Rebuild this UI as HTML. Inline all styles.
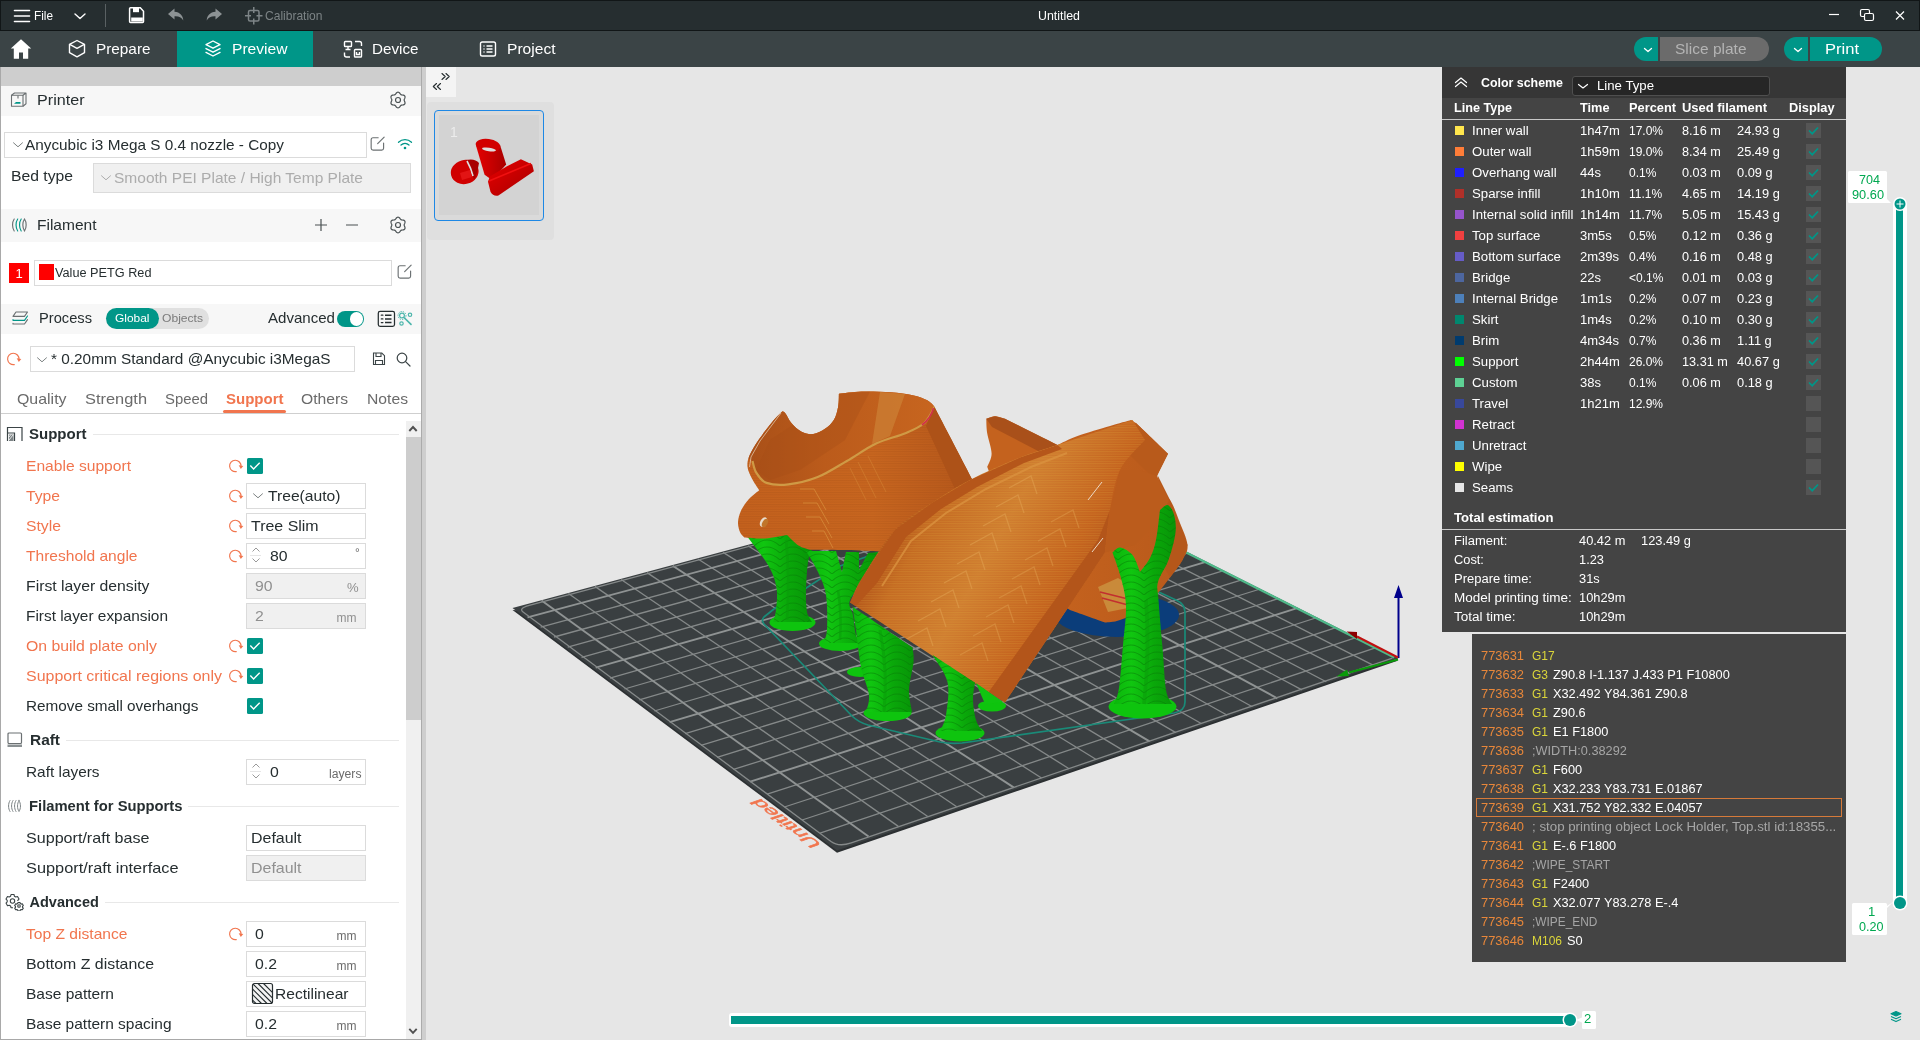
<!DOCTYPE html>
<html><head><meta charset="utf-8"><title>Untitled</title><style>html,body{margin:0;padding:0}body{width:1920px;height:1040px;overflow:hidden;position:relative;background:#e6e6e6;font-family:"Liberation Sans",sans-serif}
.a{position:absolute;display:block}.t{position:absolute;white-space:nowrap;display:block;transform-origin:0 50%}</style></head><body><div id="app" style="position:absolute;left:0;top:0;width:1920px;height:1040px;will-change:transform">
<svg class="a" style="left:0;top:0" width="1920" height="1040" viewBox="0 0 1920 1040">
<defs>
<linearGradient id="gTube" gradientUnits="userSpaceOnUse" x1="880" y1="560" x2="1060" y2="660"><stop offset="0" stop-color="#b4561a"/><stop offset=".12" stop-color="#c46a22"/><stop offset=".45" stop-color="#cf7d30"/><stop offset=".8" stop-color="#c4621e"/><stop offset="1" stop-color="#b2541a"/></linearGradient>
<linearGradient id="gCup" gradientUnits="userSpaceOnUse" x1="740" y1="0" x2="980" y2="0"><stop offset="0" stop-color="#c4611d"/><stop offset=".55" stop-color="#c8661f"/><stop offset="1" stop-color="#b4561a"/></linearGradient>
<linearGradient id="gIn" gradientUnits="userSpaceOnUse" x1="750" y1="0" x2="935" y2="0"><stop offset="0" stop-color="#a95018"/><stop offset=".4" stop-color="#bb5b1b"/><stop offset="1" stop-color="#c7651f"/></linearGradient>
<linearGradient id="gBase" gradientUnits="userSpaceOnUse" x1="1060" y1="0" x2="1190" y2="0"><stop offset="0" stop-color="#c4621e"/><stop offset="1" stop-color="#b8591b"/></linearGradient>
<linearGradient id="gG" x1="0" y1="0" x2="1" y2="0"><stop offset="0" stop-color="#0bb40b"/><stop offset=".3" stop-color="#10c610"/><stop offset=".65" stop-color="#0aa80a"/><stop offset="1" stop-color="#079407"/></linearGradient>
<pattern id="grain" width="26" height="7" patternUnits="userSpaceOnUse"><path d="M-2 9 Q13 -7 28 9" fill="none" stroke="#067e06" stroke-width="1.1" opacity=".55"/></pattern>
<pattern id="lay" width="6" height="2.4" patternUnits="userSpaceOnUse"><rect x="0" y="0" width="6" height="1" fill="#e3b040" opacity=".22"/></pattern>
<pattern id="lay2" width="6" height="2.4" patternUnits="userSpaceOnUse"><rect x="0" y="0" width="6" height="1" fill="#8a3c10" opacity=".16"/></pattern>
</defs>
<polygon points="1398.4,660.5 512.5,610.0 837.0,852.7" fill="#2c3032"/>
<polygon points="1398.4,658.5 1025.5,470.5 512.5,608.0 837.0,850.5" fill="#3a3f41"/>
<clipPath id="platec"><polygon points="1398.4,658.5 1025.5,470.5 512.5,608.0 837.0,850.5"/></clipPath>
<g clip-path="url(#platec)"><g transform="translate(876,0) scale(1.0098,1) translate(-876,-0.5)"><line x1="1372.0" y1="647.9" x2="820.5" y2="833.7" stroke="#858989" stroke-width="1.30"/><line x1="1369.1" y1="666.1" x2="1002.9" y2="478.2" stroke="#858989" stroke-width="1.30"/><line x1="1352.0" y1="637.8" x2="802.8" y2="820.5" stroke="#858989" stroke-width="1.30"/><line x1="1345.6" y1="674.1" x2="981.0" y2="484.0" stroke="#858989" stroke-width="1.30"/><line x1="1332.3" y1="627.8" x2="785.3" y2="807.5" stroke="#858989" stroke-width="1.30"/><line x1="1321.8" y1="682.2" x2="958.9" y2="490.0" stroke="#858989" stroke-width="1.30"/><line x1="1312.9" y1="618.0" x2="768.2" y2="794.7" stroke="#858989" stroke-width="1.30"/><line x1="1297.8" y1="690.4" x2="936.6" y2="496.0" stroke="#858989" stroke-width="1.30"/><line x1="1293.8" y1="608.4" x2="751.4" y2="782.2" stroke="#8f9393" stroke-width="1.90"/><line x1="1273.4" y1="698.8" x2="914.0" y2="502.0" stroke="#8f9393" stroke-width="1.90"/><line x1="1275.0" y1="598.9" x2="734.9" y2="769.9" stroke="#858989" stroke-width="1.30"/><line x1="1248.7" y1="707.2" x2="891.2" y2="508.2" stroke="#858989" stroke-width="1.30"/><line x1="1256.5" y1="589.5" x2="718.6" y2="757.8" stroke="#858989" stroke-width="1.30"/><line x1="1223.8" y1="715.7" x2="868.1" y2="514.3" stroke="#858989" stroke-width="1.30"/><line x1="1238.3" y1="580.3" x2="702.7" y2="745.9" stroke="#858989" stroke-width="1.30"/><line x1="1198.5" y1="724.3" x2="844.8" y2="520.6" stroke="#858989" stroke-width="1.30"/><line x1="1220.3" y1="571.2" x2="687.0" y2="734.2" stroke="#858989" stroke-width="1.30"/><line x1="1172.9" y1="733.1" x2="821.3" y2="526.9" stroke="#858989" stroke-width="1.30"/><line x1="1202.7" y1="562.3" x2="671.6" y2="722.7" stroke="#8f9393" stroke-width="1.90"/><line x1="1146.9" y1="741.9" x2="797.5" y2="533.3" stroke="#8f9393" stroke-width="1.90"/><line x1="1185.3" y1="553.5" x2="656.5" y2="711.5" stroke="#858989" stroke-width="1.30"/><line x1="1120.7" y1="750.9" x2="773.4" y2="539.8" stroke="#858989" stroke-width="1.30"/><line x1="1168.1" y1="544.9" x2="641.6" y2="700.4" stroke="#858989" stroke-width="1.30"/><line x1="1094.1" y1="760.0" x2="749.1" y2="546.3" stroke="#858989" stroke-width="1.30"/><line x1="1151.2" y1="536.3" x2="626.9" y2="689.5" stroke="#858989" stroke-width="1.30"/><line x1="1067.2" y1="769.2" x2="724.6" y2="552.9" stroke="#858989" stroke-width="1.30"/><line x1="1134.6" y1="527.9" x2="612.5" y2="678.7" stroke="#858989" stroke-width="1.30"/><line x1="1039.9" y1="778.5" x2="699.7" y2="559.5" stroke="#858989" stroke-width="1.30"/><line x1="1118.2" y1="519.6" x2="598.4" y2="668.2" stroke="#8f9393" stroke-width="1.90"/><line x1="1012.3" y1="787.9" x2="674.6" y2="566.3" stroke="#8f9393" stroke-width="1.90"/><line x1="1102.0" y1="511.5" x2="584.4" y2="657.8" stroke="#858989" stroke-width="1.30"/><line x1="984.3" y1="797.5" x2="649.2" y2="573.1" stroke="#858989" stroke-width="1.30"/><line x1="1086.1" y1="503.4" x2="570.7" y2="647.6" stroke="#858989" stroke-width="1.30"/><line x1="955.9" y1="807.2" x2="623.6" y2="580.0" stroke="#858989" stroke-width="1.30"/><line x1="1070.4" y1="495.5" x2="557.2" y2="637.5" stroke="#858989" stroke-width="1.30"/><line x1="927.2" y1="817.0" x2="597.6" y2="586.9" stroke="#858989" stroke-width="1.30"/><line x1="1054.9" y1="487.7" x2="543.9" y2="627.6" stroke="#858989" stroke-width="1.30"/><line x1="898.1" y1="826.9" x2="571.4" y2="594.0" stroke="#858989" stroke-width="1.30"/><line x1="1039.6" y1="479.9" x2="530.9" y2="617.9" stroke="#8f9393" stroke-width="1.90"/><line x1="868.6" y1="837.0" x2="544.8" y2="601.1" stroke="#8f9393" stroke-width="1.90"/></g></g>
<path d="M1392.4 658.2 L851.3 842.9 Q838.6 847.2 831.0 841.5 L523.4 612.3 Q518.0 608.3 529.3 605.3 L1015.5 474.8 Q1024.6 472.3 1030.9 475.5 " fill="none" stroke="#858989" stroke-width="1.3"/>
<line x1="1394.3" y1="657.5" x2="1026.4" y2="471.9" stroke="#4fb98a" stroke-width="2.2"/>
<text transform="matrix(-0.80,-0.60,0.899,-0.308,822.5,845)" font-family="Liberation Sans,sans-serif" font-size="17.5" fill="#f1754e" stroke="#f1754e" stroke-width=".6" textLength="78" lengthAdjust="spacingAndGlyphs">Untitled</text>
<path d="M774 609 L764 617 Q761 620 764 624 L852 716 Q858 722 868 725 L940 742 Q950 744 962 743 L1174 713 Q1185 711 1185 702 L1185 612 Q1185 604 1176 600 L1150 588" fill="none" stroke="#1a8a78" stroke-width="1.7"/>
<path d="M774 609 L840 566 L880 552" fill="none" stroke="#1a8a78" stroke-width="1.7"/>
<ellipse cx="1117" cy="615" rx="62" ry="22" fill="#0b3d7a"/>
<ellipse cx="870" cy="588" rx="28" ry="12" fill="#0b3d7a"/>
<ellipse cx="792.5" cy="622.5" rx="23" ry="8.5" fill="#0ec40e"/><path d="M743.0 531.0 C746.7 531.0 757.7 531.5 765.0 531.0 C772.3 530.5 783.3 528.5 787.0 528.0 C789.0 530.8 794.8 541.3 799.0 545.0 C803.2 548.7 809.8 549.2 812.0 550.0 C811.3 552.0 809.0 555.3 808.0 562.0 C807.0 568.7 806.2 581.7 806.0 590.0 C805.8 598.3 806.0 606.7 807.0 612.0 C808.0 617.3 811.2 620.3 812.0 622.0 C805.5 622.0 779.5 622.0 773.0 622.0 C773.5 620.0 775.4 615.7 776.0 610.0 C776.6 604.3 777.8 595.5 776.5 588.0 C775.2 580.5 773.6 574.5 768.0 565.0 C762.4 555.5 747.2 536.7 743.0 531.0Z" fill="url(#gG)"/><path d="M743.0 531.0 C746.7 531.0 757.7 531.5 765.0 531.0 C772.3 530.5 783.3 528.5 787.0 528.0 C789.0 530.8 794.8 541.3 799.0 545.0 C803.2 548.7 809.8 549.2 812.0 550.0 C811.3 552.0 809.0 555.3 808.0 562.0 C807.0 568.7 806.2 581.7 806.0 590.0 C805.8 598.3 806.0 606.7 807.0 612.0 C808.0 617.3 811.2 620.3 812.0 622.0 C805.5 622.0 779.5 622.0 773.0 622.0 C773.5 620.0 775.4 615.7 776.0 610.0 C776.6 604.3 777.8 595.5 776.5 588.0 C775.2 580.5 773.6 574.5 768.0 565.0 C762.4 555.5 747.2 536.7 743.0 531.0Z" fill="url(#grain)"/>
<path d="M786 540 Q790 575 787 620" stroke="#0a9c0a" stroke-width="2.5" fill="none" opacity=".6"/>
<ellipse cx="840" cy="643.5" rx="21" ry="7.5" fill="#0ec40e"/><path d="M806.0 551.0 C811.0 551.0 831.0 551.0 836.0 551.0 C837.0 554.5 841.0 568.5 842.0 572.0 C842.7 568.7 845.3 555.3 846.0 552.0 C848.2 552.0 856.8 552.0 859.0 552.0 C859.0 555.0 859.0 567.0 859.0 570.0 C860.5 567.2 866.5 555.8 868.0 553.0 C870.0 552.8 878.0 552.2 880.0 552.0 C878.0 556.0 873.0 568.0 868.0 576.0 C863.0 584.0 852.5 593.5 850.0 600.0 C847.5 606.5 852.0 609.2 853.0 615.0 C854.0 620.8 854.7 630.3 856.0 635.0 C857.3 639.7 860.2 641.7 861.0 643.0 C854.7 643.0 829.3 643.0 823.0 643.0 C823.7 640.8 826.5 638.0 827.0 630.0 C827.5 622.0 827.5 604.7 826.0 595.0 C824.5 585.3 821.3 579.3 818.0 572.0 C814.7 564.7 808.0 554.5 806.0 551.0Z" fill="url(#gG)"/><path d="M806.0 551.0 C811.0 551.0 831.0 551.0 836.0 551.0 C837.0 554.5 841.0 568.5 842.0 572.0 C842.7 568.7 845.3 555.3 846.0 552.0 C848.2 552.0 856.8 552.0 859.0 552.0 C859.0 555.0 859.0 567.0 859.0 570.0 C860.5 567.2 866.5 555.8 868.0 553.0 C870.0 552.8 878.0 552.2 880.0 552.0 C878.0 556.0 873.0 568.0 868.0 576.0 C863.0 584.0 852.5 593.5 850.0 600.0 C847.5 606.5 852.0 609.2 853.0 615.0 C854.0 620.8 854.7 630.3 856.0 635.0 C857.3 639.7 860.2 641.7 861.0 643.0 C854.7 643.0 829.3 643.0 823.0 643.0 C823.7 640.8 826.5 638.0 827.0 630.0 C827.5 622.0 827.5 604.7 826.0 595.0 C824.5 585.3 821.3 579.3 818.0 572.0 C814.7 564.7 808.0 554.5 806.0 551.0Z" fill="url(#grain)"/>
<path d="M838 590 Q842 615 840 640" stroke="#0a9c0a" stroke-width="2.500" fill="none" opacity=".6"/>
<clipPath id="cupc"><path d="M782.6 411.3 C781.1 412.8 777.7 415.5 773.8 420.1 C769.9 424.7 763.2 433.3 759.2 439.1 C755.2 444.9 751.7 450.5 749.7 455.1 C747.8 459.7 747.1 462.9 747.5 466.8 C747.9 470.7 749.9 474.6 751.9 478.5 C753.9 482.4 758.0 488.2 759.2 490.2 C757.5 491.7 752.0 495.6 749.0 499.0 C746.0 502.4 742.8 506.8 741.0 510.7 C739.2 514.6 738.1 518.8 738.0 522.4 C737.9 526.0 739.1 530.1 740.2 532.6 C741.3 535.1 743.7 536.7 744.4 537.5 C747.8 537.7 757.9 538.9 765.0 538.5 C772.1 538.1 783.3 535.6 787.0 535.0 C788.9 536.8 794.7 543.0 798.5 545.5 C802.3 548.0 808.1 549.1 810.0 549.8 C815.3 549.8 830.8 549.8 842.0 550.0 C853.2 550.2 869.0 550.8 877.0 551.3 C885.0 551.8 887.8 552.7 890.0 553.0 C906.7 544.2 973.3 508.8 990.0 500.0 C987.1 496.7 975.5 483.3 972.6 480.0 C966.3 467.8 940.9 419.1 934.6 406.9 C933.4 405.8 930.9 402.2 927.3 400.3 C923.6 398.4 918.8 396.5 912.7 395.2 C906.6 393.9 899.2 392.9 890.7 392.3 C882.2 391.7 870.1 391.4 861.5 391.6 C852.9 391.9 842.7 393.4 838.9 393.8 C838.8 396.0 839.0 402.5 838.1 406.9 C837.2 411.3 836.0 416.5 833.8 420.1 C831.6 423.8 828.4 426.5 825.0 428.8 C821.6 431.1 817.2 433.5 813.3 434.0 C809.4 434.5 805.2 433.6 801.6 431.8 C798.0 430.0 794.1 426.1 791.4 423.0 C788.7 419.9 787.0 415.4 785.5 413.5 C784.0 411.6 783.1 411.7 782.6 411.3Z"/></clipPath>
<path d="M782.6 411.3 C781.1 412.8 777.7 415.5 773.8 420.1 C769.9 424.7 763.2 433.3 759.2 439.1 C755.2 444.9 751.7 450.5 749.7 455.1 C747.8 459.7 747.1 462.9 747.5 466.8 C747.9 470.7 749.9 474.6 751.9 478.5 C753.9 482.4 758.0 488.2 759.2 490.2 C757.5 491.7 752.0 495.6 749.0 499.0 C746.0 502.4 742.8 506.8 741.0 510.7 C739.2 514.6 738.1 518.8 738.0 522.4 C737.9 526.0 739.1 530.1 740.2 532.6 C741.3 535.1 743.7 536.7 744.4 537.5 C747.8 537.7 757.9 538.9 765.0 538.5 C772.1 538.1 783.3 535.6 787.0 535.0 C788.9 536.8 794.7 543.0 798.5 545.5 C802.3 548.0 808.1 549.1 810.0 549.8 C815.3 549.8 830.8 549.8 842.0 550.0 C853.2 550.2 869.0 550.8 877.0 551.3 C885.0 551.8 887.8 552.7 890.0 553.0 C906.7 544.2 973.3 508.8 990.0 500.0 C987.1 496.7 975.5 483.3 972.6 480.0 C966.3 467.8 940.9 419.1 934.6 406.9 C933.4 405.8 930.9 402.2 927.3 400.3 C923.6 398.4 918.8 396.5 912.7 395.2 C906.6 393.9 899.2 392.9 890.7 392.3 C882.2 391.7 870.1 391.4 861.5 391.6 C852.9 391.9 842.7 393.4 838.9 393.8 C838.8 396.0 839.0 402.5 838.1 406.9 C837.2 411.3 836.0 416.5 833.8 420.1 C831.6 423.8 828.4 426.5 825.0 428.8 C821.6 431.1 817.2 433.5 813.3 434.0 C809.4 434.5 805.2 433.6 801.6 431.8 C798.0 430.0 794.1 426.1 791.4 423.0 C788.7 419.9 787.0 415.4 785.5 413.5 C784.0 411.6 783.1 411.7 782.6 411.3Z" fill="url(#gCup)"/>
<path d="M782.6 411.3 C781.1 412.8 777.7 415.5 773.8 420.1 C769.9 424.7 763.2 433.3 759.2 439.1 C755.2 444.9 751.7 450.5 749.7 455.1 C747.8 459.7 747.1 462.9 747.5 466.8 C747.9 470.7 749.9 474.6 751.9 478.5 C753.9 482.4 758.0 488.2 759.2 490.2 C757.5 491.7 752.0 495.6 749.0 499.0 C746.0 502.4 742.8 506.8 741.0 510.7 C739.2 514.6 738.1 518.8 738.0 522.4 C737.9 526.0 739.1 530.1 740.2 532.6 C741.3 535.1 743.7 536.7 744.4 537.5 C747.8 537.7 757.9 538.9 765.0 538.5 C772.1 538.1 783.3 535.6 787.0 535.0 C788.9 536.8 794.7 543.0 798.5 545.5 C802.3 548.0 808.1 549.1 810.0 549.8 C815.3 549.8 830.8 549.8 842.0 550.0 C853.2 550.2 869.0 550.8 877.0 551.3 C885.0 551.8 887.8 552.7 890.0 553.0 C906.7 544.2 973.3 508.8 990.0 500.0 C987.1 496.7 975.5 483.3 972.6 480.0 C966.3 467.8 940.9 419.1 934.6 406.9 C933.4 405.8 930.9 402.2 927.3 400.3 C923.6 398.4 918.8 396.5 912.7 395.2 C906.6 393.9 899.2 392.9 890.7 392.3 C882.2 391.7 870.1 391.4 861.5 391.6 C852.9 391.9 842.7 393.4 838.9 393.8 C838.8 396.0 839.0 402.5 838.1 406.9 C837.2 411.3 836.0 416.5 833.8 420.1 C831.6 423.8 828.4 426.5 825.0 428.8 C821.6 431.1 817.2 433.5 813.3 434.0 C809.4 434.5 805.2 433.6 801.6 431.8 C798.0 430.0 794.1 426.1 791.4 423.0 C788.7 419.9 787.0 415.4 785.5 413.5 C784.0 411.6 783.1 411.7 782.6 411.3Z" fill="url(#lay2)"/>
<g clip-path="url(#cupc)"><path d="M934.6 406.9 C932.9 409.6 929.3 418.6 924.4 423.0 C919.5 427.4 913.4 429.8 905.4 433.2 C897.4 436.6 885.9 438.9 876.1 443.5 C866.4 448.1 856.6 455.4 846.9 461.0 C837.2 466.6 827.4 473.2 817.7 477.1 C808.0 481.0 797.0 483.4 788.5 484.4 C780.0 485.4 771.9 484.8 766.5 482.9 C761.1 480.9 758.6 476.3 756.3 472.7 C754.0 469.1 753.1 462.9 752.5 461.0 L735 450 L735 380 L945 380Z" fill="url(#gIn)"/>
<path d="M838.9 393.8 L870 391.5 L845 440 L800 470 L770 480 L756 470 L770 440 Z" fill="#a64e17" opacity=".35"/>
<path d="M880 392 L905 394 L890 436 L872 444Z" fill="#d08a3c" opacity=".55"/>
<path d="M934.6 406.9 C932.9 409.6 929.3 418.6 924.4 423.0 C919.5 427.4 913.4 429.8 905.4 433.2 C897.4 436.6 885.9 438.9 876.1 443.5 C866.4 448.1 856.6 455.4 846.9 461.0 C837.2 466.6 827.4 473.2 817.7 477.1 C808.0 481.0 797.0 483.4 788.5 484.4 C780.0 485.4 771.9 484.8 766.5 482.9 C761.1 480.9 758.6 476.3 756.3 472.7 C754.0 469.1 753.1 462.9 752.5 461.0" fill="none" stroke="#cf9a45" stroke-width="2.2"/>
<path d="M934.6 406.9 L972.6 480 L990 500 L960 500 L926 426Z" fill="#ad5218"/>
<g fill="none" stroke="#d9913f" stroke-width="1" opacity=".7"><path d="M800 489 L814 489 L826 510 M803 503 L817 503 L829 524 M806 517 L820 517 L832 538 M812 531 L824 531 L833 548"/><path d="M850 468 L866 500 M858 462 L876 498 M868 456 L886 492" opacity=".6"/></g>
</g>
<path d="M933.500 408 Q931 418 922 425" fill="none" stroke="#d2304a" stroke-width="1.600"/>
<path d="M781 413 L760 441 L751 457 L749.500 467" fill="none" stroke="#e6d2b8" stroke-width=".9" opacity=".8"/>
<ellipse cx="763.500" cy="522" rx="3.200" ry="5.200" transform="rotate(28 763.500 522)" fill="#e8dccc"/>
<ellipse cx="765" cy="523" rx="2.600" ry="4.600" transform="rotate(28 765 523)" fill="#c0752a"/>
<path d="M986.3 418.8 C987.8 418.4 991.9 416.3 995.0 416.3 C998.1 416.3 1003.3 418.4 1005.0 418.8 C1013.8 423.2 1048.8 440.6 1057.5 445.0 C1060.8 443.5 1068.8 439.2 1077.5 436.0 C1086.2 432.8 1101.1 428.7 1110.0 426.0 C1118.9 423.3 1127.5 421.0 1131.0 420.0 C1131.8 420.5 1135.2 422.5 1136.0 423.0 C1141.3 428.1 1162.7 448.6 1168.0 453.8 C1165.8 458.1 1157.2 475.6 1155.0 480.0 C1155.2 481.0 1153.5 482.7 1156.0 486.0 C1158.5 489.3 1166.2 494.3 1170.0 500.0 C1173.8 505.7 1175.9 512.5 1178.8 520.0 C1181.7 527.5 1186.9 538.3 1187.5 545.0 C1188.1 551.7 1185.4 554.6 1182.5 560.0 C1179.6 565.4 1176.2 569.6 1170.0 577.5 C1163.8 585.4 1153.3 600.4 1145.0 607.5 C1136.7 614.6 1126.7 617.5 1120.0 620.0 C1113.3 622.5 1107.5 622.1 1105.0 622.5 C1099.2 620.4 1075.8 612.1 1070.0 610.0 C1065.0 606.7 1045.0 593.3 1040.0 590.0 C1033.3 575.0 1006.7 515.0 1000.0 500.0 C997.9 494.5 989.3 472.3 987.2 466.8 C987.9 464.6 991.6 459.3 991.6 453.7 C991.6 448.1 988.1 439.0 987.2 433.2 C986.3 427.4 986.4 421.2 986.3 418.8Z" fill="url(#gBase)"/>
<path d="M986.300 418.800 L995 416.300 L1005 418.800 L1057.500 445 L1040 452 L992 427Z" fill="#a9501a"/>
<path d="M1098 587 L1118 578 L1140 592 L1128 608 L1108 612Z" fill="#c98a3a"/>
<path d="M1100 592 L1132 600 M1102 598 L1128 605" stroke="#c22f2f" stroke-width="1.500"/>
<path d="M1157.500 475 L1170 500 L1187.500 545 L1182.500 560 L1170 577.500 L1160 560 L1165 520Z" fill="#b5571a"/>
<path d="M1136 423 L1168 453.750 L1155 480 L1125 450Z" fill="#b85a1b"/>
<clipPath id="tubec"><path d="M850.0 602.5 C852.0 598.4 854.5 590.1 862.0 578.0 C869.5 565.9 883.2 542.6 895.0 530.0 C906.8 517.4 920.0 510.8 932.5 502.5 C945.0 494.2 955.4 487.5 970.0 480.0 C984.6 472.5 1005.4 463.3 1020.0 457.5 C1034.6 451.7 1038.8 451.2 1057.5 445.0 C1076.2 438.8 1120.0 424.2 1132.5 420.0 C1134.6 423.3 1142.9 436.7 1145.0 440.0 C1140.8 445.0 1125.8 458.3 1120.0 470.0 C1114.2 481.7 1112.5 496.2 1110.0 510.0 C1107.5 523.8 1105.8 545.4 1105.0 552.5 C1103.3 555.0 1111.7 542.5 1095.0 567.5 C1078.3 592.5 1020.0 680.0 1005.0 702.5 C979.2 685.8 875.8 619.2 850.0 602.5Z"/></clipPath>
<path d="M850.0 602.5 C852.0 598.4 854.5 590.1 862.0 578.0 C869.5 565.9 883.2 542.6 895.0 530.0 C906.8 517.4 920.0 510.8 932.5 502.5 C945.0 494.2 955.4 487.5 970.0 480.0 C984.6 472.5 1005.4 463.3 1020.0 457.5 C1034.6 451.7 1038.8 451.2 1057.5 445.0 C1076.2 438.8 1120.0 424.2 1132.5 420.0 C1134.6 423.3 1142.9 436.7 1145.0 440.0 C1140.8 445.0 1125.8 458.3 1120.0 470.0 C1114.2 481.7 1112.5 496.2 1110.0 510.0 C1107.5 523.8 1105.8 545.4 1105.0 552.5 C1103.3 555.0 1111.7 542.5 1095.0 567.5 C1078.3 592.5 1020.0 680.0 1005.0 702.5 C979.2 685.8 875.8 619.2 850.0 602.5Z" fill="url(#gTube)"/>
<path d="M850.0 602.5 C852.0 598.4 854.5 590.1 862.0 578.0 C869.5 565.9 883.2 542.6 895.0 530.0 C906.8 517.4 920.0 510.8 932.5 502.5 C945.0 494.2 955.4 487.5 970.0 480.0 C984.6 472.5 1005.4 463.3 1020.0 457.5 C1034.6 451.7 1038.8 451.2 1057.5 445.0 C1076.2 438.8 1120.0 424.2 1132.5 420.0 C1134.6 423.3 1142.9 436.7 1145.0 440.0 C1140.8 445.0 1125.8 458.3 1120.0 470.0 C1114.2 481.7 1112.5 496.2 1110.0 510.0 C1107.5 523.8 1105.8 545.4 1105.0 552.5 C1103.3 555.0 1111.7 542.5 1095.0 567.5 C1078.3 592.5 1020.0 680.0 1005.0 702.5 C979.2 685.8 875.8 619.2 850.0 602.5Z" fill="url(#lay)"/>
<g clip-path="url(#tubec)">
<path d="M850 602.500 L862 578 L895 530 L932.500 502.500 L970 480 L1020 457.500 L1057.500 445 L1062 449 L1024 463 L977 487 L941 509 L906 537 L877 583 L856 606Z" fill="#b5561a"/>
<path d="M882 586 L911 541 L946 513 L986 489 L1031 467 L1067 453" fill="none" stroke="#d9913f" stroke-width="2" opacity=".8"/>
<path d="M905 640 l22 -12 l6 18 M918 621 l22 -12 l6 18 M931 602 l22 -12 l6 18 M944 583 l22 -12 l6 18 M957 564 l22 -12 l6 18 M970 545 l22 -12 l6 18 M983 526 l22 -12 l6 18 M996 507 l22 -12 l6 18 M1009 488 l22 -12 l6 18" fill="none" stroke="#e0a050" stroke-width="1.3" opacity=".55"/>
<path d="M960 655 l22 -12 l6 18 M973 636 l22 -12 l6 18 M986 617 l22 -12 l6 18 M999 598 l22 -12 l6 18 M1012 579 l22 -12 l6 18 M1025 560 l22 -12 l6 18 M1038 541 l22 -12 l6 18 M1051 522 l22 -12 l6 18" fill="none" stroke="#e0a050" stroke-width="1.3" opacity=".45"/>
<path d="M1005 702.500 L1095 567.500 L1105 552.500 L1110 510 L1098 540 L988 693Z" fill="#b3551a"/>
</g>
<path d="M1105 552.500 L1110 510 L1120 470 L1140 470 L1157 476 L1169 500 L1160 520 L1135 545Z" fill="#bb5c1c"/>
<path d="M1088 500 L1102 482 M1092 552 L1103 538" stroke="#ecd9c4" stroke-width="1"/>
<ellipse cx="860" cy="672" rx="13" ry="5" fill="#0ec40e"/>
<ellipse cx="887.5" cy="713" rx="24" ry="8" fill="#0ec40e"/><path d="M852.5 606.8 C862.5 613.6 902.5 640.7 912.5 647.5 C912.7 649.9 914.1 654.9 913.5 662.0 C912.9 669.1 909.2 681.7 909.0 690.0 C908.8 698.3 911.5 708.3 912.0 712.0 C904.3 712.0 873.7 712.0 866.0 712.0 C866.5 709.2 869.8 702.5 869.0 695.0 C868.2 687.5 863.2 677.8 861.0 667.0 C858.8 656.2 857.4 640.0 856.0 630.0 C854.6 620.0 853.1 610.7 852.5 606.8Z" fill="url(#gG)"/><path d="M852.5 606.8 C862.5 613.6 902.5 640.7 912.5 647.5 C912.7 649.9 914.1 654.9 913.5 662.0 C912.9 669.1 909.2 681.7 909.0 690.0 C908.8 698.3 911.5 708.3 912.0 712.0 C904.3 712.0 873.7 712.0 866.0 712.0 C866.5 709.2 869.8 702.5 869.0 695.0 C868.2 687.5 863.2 677.8 861.0 667.0 C858.8 656.2 857.4 640.0 856.0 630.0 C854.6 620.0 853.1 610.7 852.5 606.8Z" fill="url(#grain)"/>
<path d="M880 630 Q888 670 884 712" stroke="#0a9c0a" stroke-width="3" fill="none" opacity=".55"/>
<ellipse cx="992" cy="706" rx="14" ry="5.500" fill="#0ec40e"/>
<path d="M976 683 L1003 702 L985 704Z" fill="#10c410"/>
<ellipse cx="960" cy="733" rx="24.5" ry="8.5" fill="#0ec40e"/><path d="M932.5 655.0 C939.6 659.6 967.9 677.9 975.0 682.5 C974.7 685.4 972.8 693.8 973.0 700.0 C973.2 706.2 974.5 714.8 976.0 720.0 C977.5 725.2 981.0 729.2 982.0 731.0 C975.0 731.0 947.0 731.0 940.0 731.0 C941.0 728.3 944.8 723.2 946.0 715.0 C947.2 706.8 949.8 692.0 947.5 682.0 C945.2 672.0 935.0 659.5 932.5 655.0Z" fill="url(#gG)"/><path d="M932.5 655.0 C939.6 659.6 967.9 677.9 975.0 682.5 C974.7 685.4 972.8 693.8 973.0 700.0 C973.2 706.2 974.5 714.8 976.0 720.0 C977.5 725.2 981.0 729.2 982.0 731.0 C975.0 731.0 947.0 731.0 940.0 731.0 C941.0 728.3 944.8 723.2 946.0 715.0 C947.2 706.8 949.8 692.0 947.5 682.0 C945.2 672.0 935.0 659.5 932.5 655.0Z" fill="url(#grain)"/>
<ellipse cx="1142.5" cy="706.5" rx="34" ry="12" fill="#0ec40e"/><path d="M1112.5 552.5 C1113.8 551.7 1116.7 547.1 1120.0 547.5 C1123.3 547.9 1129.2 550.9 1132.5 555.0 C1135.8 559.1 1138.8 569.2 1140.0 572.0 C1141.7 569.7 1147.3 563.3 1150.0 558.0 C1152.7 552.7 1154.3 548.0 1156.0 540.0 C1157.7 532.0 1159.3 515.0 1160.0 510.0 C1161.2 509.2 1165.2 504.3 1167.5 505.0 C1169.8 505.7 1172.4 509.4 1173.8 514.0 C1175.1 518.6 1176.4 524.8 1175.5 532.5 C1174.6 540.2 1171.4 551.8 1168.5 560.0 C1165.6 568.2 1159.7 575.3 1158.0 582.0 C1156.3 588.7 1157.8 589.1 1158.5 600.0 C1159.2 610.9 1161.2 632.5 1162.5 647.5 C1163.8 662.5 1164.4 680.6 1166.0 690.0 C1167.6 699.4 1171.0 701.7 1172.0 704.0 C1162.3 704.0 1123.7 704.0 1114.0 704.0 C1114.8 701.3 1117.5 697.8 1119.0 688.0 C1120.5 678.2 1121.8 658.7 1123.0 645.0 C1124.2 631.3 1126.3 617.2 1126.0 606.0 C1125.7 594.8 1123.2 586.9 1121.0 578.0 C1118.8 569.1 1113.9 556.8 1112.5 552.5Z" fill="url(#gG)"/><path d="M1112.5 552.5 C1113.8 551.7 1116.7 547.1 1120.0 547.5 C1123.3 547.9 1129.2 550.9 1132.5 555.0 C1135.8 559.1 1138.8 569.2 1140.0 572.0 C1141.7 569.7 1147.3 563.3 1150.0 558.0 C1152.7 552.7 1154.3 548.0 1156.0 540.0 C1157.7 532.0 1159.3 515.0 1160.0 510.0 C1161.2 509.2 1165.2 504.3 1167.5 505.0 C1169.8 505.7 1172.4 509.4 1173.8 514.0 C1175.1 518.6 1176.4 524.8 1175.5 532.5 C1174.6 540.2 1171.4 551.8 1168.5 560.0 C1165.6 568.2 1159.7 575.3 1158.0 582.0 C1156.3 588.7 1157.8 589.1 1158.5 600.0 C1159.2 610.9 1161.2 632.5 1162.5 647.5 C1163.8 662.5 1164.4 680.6 1166.0 690.0 C1167.6 699.4 1171.0 701.7 1172.0 704.0 C1162.3 704.0 1123.7 704.0 1114.0 704.0 C1114.8 701.3 1117.5 697.8 1119.0 688.0 C1120.5 678.2 1121.8 658.7 1123.0 645.0 C1124.2 631.3 1126.3 617.2 1126.0 606.0 C1125.7 594.8 1123.2 586.9 1121.0 578.0 C1118.8 569.1 1113.9 556.8 1112.5 552.5Z" fill="url(#grain)"/>
<path d="M1146 600 Q1150 650 1144 704" stroke="#0a9c0a" stroke-width="3.500" fill="none" opacity=".5"/>
<path d="M1397.500 658 L1397.500 598 L1394 598 L1398.500 585 L1403 598 L1399.500 598 L1399.500 658Z" fill="#00008b"/>
<path d="M1398 657.500 L1357 636.500" stroke="#c01010" stroke-width="2"/><path d="M1346.500 631.500 L1357 632 L1357 639Z" fill="#8b0000"/>
<path d="M1398 659.500 L1349 672.500" stroke="#0a9a0a" stroke-width="2"/><path d="M1336.500 676.500 L1347 669.500 L1349 676Z" fill="#0a9a0a"/>
</svg>
<div class="a" style="left:0px;top:0px;width:1920px;height:31px;background:#262e30;"></div>
<div class="a" style="left:0px;top:30px;width:1920px;height:1px;background:#111617;"></div>
<div class="a" style="left:0px;top:0px;width:1920px;height:1px;background:#111617;"></div>
<div class="a" style="left:0px;top:0px;width:1px;height:31px;background:#111617;"></div>
<div class="a" style="left:1919px;top:0px;width:1px;height:31px;background:#111617;"></div>
<svg class="a" style="left:12px;top:7px" width="20" height="18" viewBox="0 0 20 18"><g stroke="#fff" stroke-width="1.6" stroke-linecap="round"><path d="M2.5 3.5h15M2.5 9h15M2.5 14.5h15"/></g></svg>
<div class="t" style="left:33.50px;top:6.64px;height:18px;line-height:18px;font-size:12px;color:#fff;transform:scaleX(0.9826);">File</div>
<svg class="a" style="left:72px;top:10px" width="16" height="12" viewBox="0 0 16 12"><path d="M3 4l5 4.5L13 4" fill="none" stroke="#fff" stroke-width="1.4" stroke-linecap="round" stroke-linejoin="round"/></svg>
<div class="a" style="left:105px;top:4px;width:1px;height:23px;background:#5a6163;"></div>
<svg class="a" style="left:128px;top:6px" width="18" height="18" viewBox="0 0 18 18"><path d="M2.5 1.8h9.8l3.2 3.4v10.3a.9.9 0 0 1-.9.9H2.5a.9.9 0 0 1-.9-.9V2.7a.9.9 0 0 1 .9-.9z" fill="none" stroke="#fff" stroke-width="1.5"/><path d="M5 2v4.2h6V2z" fill="#fff"/><path d="M3.2 11.5h11.6v4H3.2z" fill="#fff"/></svg>
<svg class="a" style="left:166px;top:7px" width="20" height="16" viewBox="0 0 20 16"><path d="M8.5 1.5L2 7l6.5 5.5V9.2c4-.3 6.8.9 8.8 4.3-.3-5-3.3-8.400-8.800-8.800z" fill="#8c9294"/></svg>
<svg class="a" style="left:204px;top:7px" width="20" height="16" viewBox="0 0 20 16"><path d="M11.500 1.5L18 7l-6.500 5.500V9.200c-4-.3-6.800.9-8.800 4.300.3-5 3.300-8.400 8.800-8.800z" fill="#8c9294"/></svg>
<svg class="a" style="left:244px;top:6px" width="20" height="20" viewBox="0 0 20 20"><g fill="none" stroke="#7d8486" stroke-width="1.5"><rect x="4.500" y="4.500" width="10.500" height="10.500" rx="1.500"/><path d="M9.750 1v6M9.750 12.500v6M1 9.750h6M12.500 9.750h6"/></g></svg>
<div class="t" style="left:265.00px;top:5.66px;height:20px;line-height:20px;font-size:13.5px;color:#7d8486;transform:scaleX(0.8910);">Calibration</div>
<div class="t" style="left:1038.00px;top:5.66px;height:20px;line-height:20px;font-size:13.5px;color:#fff;transform:scaleX(0.9175);">Untitled</div>
<svg class="a" style="left:1822px;top:4px" width="92" height="24" viewBox="0 0 92 24"><g fill="none" stroke="#fff" stroke-width="1.2"><path d="M7 10.500h10"/><rect x="38.500" y="5.500" width="9" height="7" rx="1.500"/><rect x="42.500" y="9.500" width="9" height="7" rx="1.500" fill="#262e30"/><path d="M74 7.500l8 8M82 7.500l-8 8"/></g></svg>
<div class="a" style="left:0px;top:31px;width:1920px;height:36px;background:#3b4446;"></div>
<div class="a" style="left:177px;top:31px;width:136px;height:36px;background:#009688;"></div>
<svg class="a" style="left:9px;top:37px" width="24" height="24" viewBox="0 0 24 24"><path d="M12 2.200L1.800 11.600h3V21.800h5.200v-6.300h4v6.300h5.200V11.600h3z" fill="#fff"/></svg>
<svg class="a" style="left:67px;top:38px" width="20" height="22" viewBox="0 0 20 22"><g fill="none" stroke="#fff" stroke-width="1.4" stroke-linejoin="round"><path d="M10 2.500l7.500 3.800v8.400L10 18.800l-7.500-4.100V6.300z"/><path d="M2.700 6.400L10 10.300l7.300-3.900"/></g></svg>
<div class="t" style="left:96.00px;top:38.17px;height:21px;line-height:21px;font-size:15px;color:#fff;transform:scaleX(1.0212);">Prepare</div>
<svg class="a" style="left:203px;top:38px" width="20" height="22" viewBox="0 0 20 22"><g fill="none" stroke="#fff" stroke-width="1.4" stroke-linejoin="round" stroke-linecap="round"><path d="M10 3l7 3.600-7 3.600-7-3.600z"/><path d="M3 10.600l7 3.600 7-3.600"/><path d="M3 14.400l7 3.600 7-3.600"/></g></svg>
<div class="t" style="left:232.00px;top:38.17px;height:21px;line-height:21px;font-size:15px;color:#fff;transform:scaleX(1.0403);">Preview</div>
<svg class="a" style="left:342px;top:38px" width="22" height="22" viewBox="0 0 22 22"><g fill="none" stroke="#fff" stroke-width="1.4"><rect x="2.500" y="3.500" width="7" height="5" rx=".8"/><path d="M6 8.500v3M3.500 11.500h5"/><rect x="12.500" y="11.500" width="7" height="7.500" rx=".8"/><path d="M14.500 14v2.500h3V14"/><path d="M13 3.500h4.500a2 2 0 0 1 2 2V8M2.500 14.500v2.500a2 2 0 0 0 2 2H8"/></g></svg>
<div class="t" style="left:372.00px;top:38.17px;height:21px;line-height:21px;font-size:15px;color:#fff;transform:scaleX(1.0142);">Device</div>
<svg class="a" style="left:478px;top:39px" width="20" height="20" viewBox="0 0 20 20"><g fill="none" stroke="#fff" stroke-width="1.4"><rect x="2.500" y="3" width="15" height="14" rx="1.800"/><path d="M8.500 7h6M8.500 10h6M8.500 13h6" /><path d="M5.500 7h1M5.500 10h1M5.500 13h1"/></g></svg>
<div class="t" style="left:507.00px;top:38.17px;height:21px;line-height:21px;font-size:15px;color:#fff;transform:scaleX(1.0388);">Project</div>
<div class="a" style="left:1634px;top:37px;width:24px;height:24px;background:#009688;border-radius:12px 0 0 12px"></div>
<div class="a" style="left:1660px;top:37px;width:109px;height:24px;background:#6b6b6b;border-radius:0 12px 12px 0"></div>
<svg class="a" style="left:1641.800px;top:44.700px" width="12" height="10" viewBox="0 0 12 10"><path d="M2.500 3.500l3.500 3 3.500-3" fill="none" stroke="#fff" stroke-width="1.3" stroke-linecap="round" stroke-linejoin="round"/></svg>
<div class="t" style="left:1675.00px;top:38.17px;height:21px;line-height:21px;font-size:15px;color:#b4b4b4;transform:scaleX(1.0331);">Slice plate</div>
<div class="a" style="left:1784px;top:37px;width:24px;height:24px;background:#009688;border-radius:12px 0 0 12px"></div>
<div class="a" style="left:1810px;top:37px;width:72px;height:24px;background:#009688;border-radius:0 12px 12px 0"></div>
<svg class="a" style="left:1791.800px;top:44.700px" width="12" height="10" viewBox="0 0 12 10"><path d="M2.500 3.500l3.500 3 3.500-3" fill="none" stroke="#fff" stroke-width="1.3" stroke-linecap="round" stroke-linejoin="round"/></svg>
<div class="t" style="left:1825.00px;top:38.17px;height:21px;line-height:21px;font-size:15px;color:#fff;transform:scaleX(1.1023);">Print</div>
<div class="a" style="left:0px;top:67px;width:426px;height:973px;background:#cecece;"></div>
<div class="a" style="left:1px;top:86px;width:420px;height:954px;background:#fff;"></div>
<div class="a" style="left:0px;top:67px;width:1px;height:973px;background:#a9a9a9;"></div>
<div class="a" style="left:421px;top:67px;width:1.2px;height:973px;background:#ababab;"></div>
<div class="a" style="left:1px;top:86px;width:420px;height:30px;background:#f7f7f7;"></div>
<div class="a" style="left:1px;top:209px;width:420px;height:33px;background:#f7f7f7;"></div>
<div class="a" style="left:1px;top:304px;width:420px;height:30px;background:#f7f7f7;"></div>
<svg class="a" style="left:10px;top:91px" width="18" height="18" viewBox="0 0 18 18"><g fill="none" stroke="#6b7072" stroke-width="1.100" stroke-linejoin="round"><path d="M1.500 4.200h11.500v11H1.500z"/><path d="M1.500 4.200l3-2.200h11.500l-3 2.200M16 2v10.800l-3 2.400"/><path d="M8 4.500v3"/></g><path d="M4 12.800l2-1.800h4.500v1.800z" fill="#009688"/></svg>
<div class="t" style="left:37.00px;top:89.97px;height:20px;line-height:20px;font-size:14.5px;color:#262e30;transform:scaleX(1.1122);">Printer</div>
<svg class="a" style="left:389px;top:91px" width="18" height="18" viewBox="0 0 18 18"><g fill="none" stroke="#4b5254" stroke-width="1.200" stroke-linejoin="round"><path d="M9.00 1.15 L9.51 1.23 L9.99 1.46 L10.43 1.82 L10.81 2.24 L11.15 2.68 L11.45 3.09 L11.75 3.43 L12.07 3.67 L12.45 3.83 L12.90 3.92 L13.40 3.98 L13.95 4.05 L14.51 4.17 L15.03 4.37 L15.47 4.67 L15.80 5.07 L15.98 5.56 L16.02 6.09 L15.94 6.65 L15.76 7.19 L15.55 7.70 L15.34 8.16 L15.20 8.59 L15.15 9.00 L15.20 9.41 L15.34 9.84 L15.55 10.30 L15.76 10.81 L15.94 11.35 L16.02 11.91 L15.98 12.44 L15.80 12.92 L15.47 13.33 L15.03 13.63 L14.51 13.83 L13.95 13.95 L13.40 14.02 L12.90 14.08 L12.45 14.17 L12.07 14.33 L11.75 14.57 L11.45 14.91 L11.15 15.32 L10.81 15.76 L10.43 16.18 L9.99 16.54 L9.51 16.77 L9.00 16.85 L8.49 16.77 L8.01 16.54 L7.57 16.18 L7.19 15.76 L6.85 15.32 L6.55 14.91 L6.25 14.57 L5.93 14.33 L5.55 14.17 L5.10 14.08 L4.60 14.02 L4.05 13.95 L3.49 13.83 L2.97 13.63 L2.53 13.33 L2.20 12.93 L2.02 12.44 L1.98 11.91 L2.06 11.35 L2.24 10.81 L2.45 10.30 L2.66 9.84 L2.80 9.41 L2.85 9.00 L2.80 8.59 L2.66 8.16 L2.45 7.70 L2.24 7.19 L2.06 6.65 L1.98 6.09 L2.02 5.56 L2.20 5.07 L2.53 4.67 L2.97 4.37 L3.49 4.17 L4.05 4.05 L4.60 3.98 L5.10 3.92 L5.55 3.83 L5.92 3.67 L6.25 3.43 L6.55 3.09 L6.85 2.68 L7.19 2.24 L7.57 1.82 L8.01 1.46 L8.49 1.23Z"/><circle cx="9" cy="9" r="2.500"/></g></svg>
<div class="a" style="left:4px;top:132px;width:363px;height:26px;background:#fff;border:1px solid #dbdbdb;box-sizing:border-box;"></div>
<svg class="a" style="left:12px;top:141px" width="12" height="8" viewBox="0 0 12 8"><path d="M1.500 1.800L6 5.800l4.500-4" fill="none" stroke="#7c8282" stroke-width="1" stroke-linecap="round" stroke-linejoin="round"/></svg>
<div class="t" style="left:25.00px;top:134.97px;height:20px;line-height:20px;font-size:14.5px;color:#262e30;transform:scaleX(1.0571);">Anycubic i3 Mega S 0.4 nozzle - Copy</div>
<svg class="a" style="left:369.4px;top:135.4px" width="17.300" height="17.300" viewBox="0 0 16 16"><g fill="none" stroke="#6b7072" stroke-width="1.050" stroke-linecap="round"><path d="M8.500 2.500H3.800A1.800 1.800 0 0 0 2 4.300v8A1.800 1.800 0 0 0 3.800 14h8a1.800 1.800 0 0 0 1.700-1.700V7.500"/><path d="M8 8l6-6"/></g></svg>
<svg class="a" style="left:396px;top:136px" width="18" height="16" viewBox="0 0 18 16"><g fill="none" stroke="#009688" stroke-width="1.300" stroke-linecap="round"><path d="M2.500 6.200a9.500 9.500 0 0 1 13 0"/><path d="M5 9a6 6 0 0 1 8 0"/></g><circle cx="9" cy="12" r="1.300" fill="#009688"/></svg>
<div class="t" style="left:11.00px;top:166.47px;height:20px;line-height:20px;font-size:14.5px;color:#262e30;transform:scaleX(1.0832);">Bed type</div>
<div class="a" style="left:93px;top:163px;width:318px;height:30px;background:#f0f0f0;border:1px solid #dbdbdb;box-sizing:border-box;"></div>
<svg class="a" style="left:100px;top:174px" width="12" height="8" viewBox="0 0 12 8"><path d="M1.500 1.800L6 5.800l4.500-4" fill="none" stroke="#acacac" stroke-width="1" stroke-linecap="round" stroke-linejoin="round"/></svg>
<div class="t" style="left:114.00px;top:168.47px;height:20px;line-height:20px;font-size:14.5px;color:#acacac;transform:scaleX(1.0702);">Smooth PEI Plate / High Temp Plate</div>
<svg class="a" style="left:11px;top:217px" width="18" height="16" viewBox="0 0 18 16"><g fill="none" stroke-width="1.150" stroke-linecap="round"><path d="M3.200 2c-2.200 3.200-2.200 8.800 0 12" stroke="#6b7072"/><path d="M6.700 2c-2.200 3.200-2.200 8.800 0 12M10.200 2c-2.200 3.200-2.200 8.800 0 12" stroke="#009688"/><path d="M13.500 2c-2.200 3.200-2.200 8.800 0 12c2.200-3.200 2.200-8.800 0-12z" stroke="#6b7072"/></g></svg>
<div class="t" style="left:37.00px;top:214.97px;height:20px;line-height:20px;font-size:14.5px;color:#262e30;transform:scaleX(1.0701);">Filament</div>
<svg class="a" style="left:313px;top:217px" width="46" height="16" viewBox="0 0 46 16"><g stroke="#4a5052" stroke-width="1.200"><path d="M2 8h12M8 2v12M33 8h12"/></g></svg>
<svg class="a" style="left:389px;top:216px" width="18" height="18" viewBox="0 0 18 18"><g fill="none" stroke="#4b5254" stroke-width="1.200" stroke-linejoin="round"><path d="M9.00 1.15 L9.51 1.23 L9.99 1.46 L10.43 1.82 L10.81 2.24 L11.15 2.68 L11.45 3.09 L11.75 3.43 L12.07 3.67 L12.45 3.83 L12.90 3.92 L13.40 3.98 L13.95 4.05 L14.51 4.17 L15.03 4.37 L15.47 4.67 L15.80 5.07 L15.98 5.56 L16.02 6.09 L15.94 6.65 L15.76 7.19 L15.55 7.70 L15.34 8.16 L15.20 8.59 L15.15 9.00 L15.20 9.41 L15.34 9.84 L15.55 10.30 L15.76 10.81 L15.94 11.35 L16.02 11.91 L15.98 12.44 L15.80 12.92 L15.47 13.33 L15.03 13.63 L14.51 13.83 L13.95 13.95 L13.40 14.02 L12.90 14.08 L12.45 14.17 L12.07 14.33 L11.75 14.57 L11.45 14.91 L11.15 15.32 L10.81 15.76 L10.43 16.18 L9.99 16.54 L9.51 16.77 L9.00 16.85 L8.49 16.77 L8.01 16.54 L7.57 16.18 L7.19 15.76 L6.85 15.32 L6.55 14.91 L6.25 14.57 L5.93 14.33 L5.55 14.17 L5.10 14.08 L4.60 14.02 L4.05 13.95 L3.49 13.83 L2.97 13.63 L2.53 13.33 L2.20 12.93 L2.02 12.44 L1.98 11.91 L2.06 11.35 L2.24 10.81 L2.45 10.30 L2.66 9.84 L2.80 9.41 L2.85 9.00 L2.80 8.59 L2.66 8.16 L2.45 7.70 L2.24 7.19 L2.06 6.65 L1.98 6.09 L2.02 5.56 L2.20 5.07 L2.53 4.67 L2.97 4.37 L3.49 4.17 L4.05 4.05 L4.60 3.98 L5.10 3.92 L5.55 3.83 L5.92 3.67 L6.25 3.43 L6.55 3.09 L6.85 2.68 L7.19 2.24 L7.57 1.82 L8.01 1.46 L8.49 1.23Z"/><circle cx="9" cy="9" r="2.500"/></g></svg>
<div class="a" style="left:9px;top:263px;width:20px;height:19.8px;background:#ff0000;"></div>
<div class="t" style="left:15.50px;top:263.75px;height:19px;line-height:19px;font-size:13px;color:#fff;">1</div>
<div class="a" style="left:34px;top:260px;width:358px;height:26px;background:#fff;border:1px solid #dbdbdb;box-sizing:border-box;"></div>
<div class="a" style="left:39px;top:264px;width:14.5px;height:16px;background:#ff0000;"></div>
<div class="t" style="left:55.00px;top:264.44px;height:18px;line-height:18px;font-size:12.5px;color:#262e30;transform:scaleX(1.0163);">Value PETG Red</div>
<svg class="a" style="left:396.4px;top:263.4px" width="17.300" height="17.300" viewBox="0 0 16 16"><g fill="none" stroke="#6b7072" stroke-width="1.050" stroke-linecap="round"><path d="M8.500 2.500H3.800A1.800 1.800 0 0 0 2 4.300v8A1.800 1.800 0 0 0 3.800 14h8a1.800 1.800 0 0 0 1.700-1.700V7.500"/><path d="M8 8l6-6"/></g></svg>
<svg class="a" style="left:11px;top:309px" width="18" height="18" viewBox="0 0 18 18"><g fill="none" stroke-width="1.150" stroke-linejoin="round" stroke-linecap="round"><path d="M5 3h11.500l-3 4.300h-11.500z" stroke="#6b7072"/><path d="M2 10.500v.8h11.500l3-4.300" stroke="#009688"/><path d="M2 14.200v.8h11.500l3-4.300" stroke="#6b7072"/></g></svg>
<div class="t" style="left:39.00px;top:307.67px;height:20px;line-height:20px;font-size:14.5px;color:#262e30;transform:scaleX(1.0118);">Process</div>
<div class="a" style="left:106px;top:308px;width:103px;height:21px;background:#e0e0e0;border-radius:10.5px;"></div>
<div class="a" style="left:106px;top:308px;width:53px;height:21px;background:#009688;border-radius:10.5px;"></div>
<div class="t" style="left:115.00px;top:309.33px;height:18px;line-height:18px;font-size:11.5px;color:#fff;transform:scaleX(1.0378);">Global</div>
<div class="t" style="left:161.50px;top:309.33px;height:18px;line-height:18px;font-size:11.5px;color:#7a7a7a;transform:scaleX(1.0516);">Objects</div>
<div class="t" style="left:267.50px;top:307.67px;height:20px;line-height:20px;font-size:14.5px;color:#262e30;transform:scaleX(1.0388);">Advanced</div>
<div class="a" style="left:337.2px;top:310.8px;width:27px;height:16px;background:#009688;border-radius:8px;"></div>
<div class="a" style="left:349.7px;top:312px;width:13.6px;height:13.6px;background:#fff;border-radius:6.8px;"></div>
<svg class="a" style="left:377px;top:310px" width="19" height="18" viewBox="0 0 19 18"><g fill="none" stroke="#262e30" stroke-width="1.250"><rect x="1.300" y="1.400" width="16.200" height="15" rx="1.800"/><path d="M4.300 5.200h1.600M4.300 8.900h1.600M4.300 12.600h1.600" stroke-linecap="round"/><path d="M8 5.200h6.500M8 8.900h6.500M8 12.600h6.500" stroke-width="1.500"/></g></svg>
<svg class="a" style="left:397px;top:310px" width="17" height="18" viewBox="0 0 17 18"><g fill="none" stroke="#4db6ac" stroke-width="1.200"><circle cx="5" cy="5.500" r="2.400"/><circle cx="5" cy="5.500" r="4" stroke-dasharray="1.300 1.100" stroke-width="1"/><path d="M7.500 8l6.500 6.300" stroke-width="1.700" stroke-linecap="round"/><circle cx="13" cy="4.800" r="1.700"/><circle cx="4.500" cy="13.500" r="1.700"/></g></svg>
<svg class="a" style="left:6.2px;top:350.85px" width="16" height="16" viewBox="0 0 16 16"><path d="M8.300 13.600A5.700 5.700 0 1 1 13 8.300" fill="none" stroke="#f1754e" stroke-width="1.150" stroke-linecap="round"/><path d="M10.700 7.200L15.300 7.900L12.800 10.900Z" fill="#f1754e"/></svg>
<div class="a" style="left:30px;top:346px;width:325px;height:26px;background:#fff;border:1px solid #dbdbdb;box-sizing:border-box;"></div>
<svg class="a" style="left:36px;top:355.5px" width="12" height="8" viewBox="0 0 12 8"><path d="M1.500 1.800L6 5.800l4.500-4" fill="none" stroke="#7c8282" stroke-width="1" stroke-linecap="round" stroke-linejoin="round"/></svg>
<div class="t" style="left:51.00px;top:349.47px;height:20px;line-height:20px;font-size:14.5px;color:#262e30;transform:scaleX(1.0596);">* 0.20mm Standard @Anycubic i3MegaS</div>
<svg class="a" style="left:371px;top:351px" width="16" height="16" viewBox="0 0 16 16"><g fill="none" stroke="#3b4446" stroke-width="1.100"><path d="M2.500 2h8.300l2.700 2.700V13.500h-11z"/><path d="M5 2v3.500h5V2M4.500 13.500v-4h7v4"/></g></svg>
<svg class="a" style="left:395px;top:351px" width="17" height="17" viewBox="0 0 17 17"><g fill="none" stroke="#3b4446" stroke-width="1.200" stroke-linecap="round"><circle cx="7" cy="7" r="4.800"/><path d="M10.600 10.600l4.400 4.400"/></g></svg>
<div class="t" style="left:17.00px;top:388.97px;height:20px;line-height:20px;font-size:14.5px;color:#6b6b6b;transform:scaleX(1.0969);">Quality</div>
<div class="t" style="left:85.00px;top:388.97px;height:20px;line-height:20px;font-size:14.5px;color:#6b6b6b;transform:scaleX(1.1311);">Strength</div>
<div class="t" style="left:164.50px;top:388.97px;height:20px;line-height:20px;font-size:14.5px;color:#6b6b6b;transform:scaleX(1.0255);">Speed</div>
<div class="t" style="left:225.50px;top:388.97px;height:20px;line-height:20px;font-size:14.5px;color:#f1754e;font-weight:bold;transform:scaleX(1.0347);">Support</div>
<div class="t" style="left:301.00px;top:388.97px;height:20px;line-height:20px;font-size:14.5px;color:#6b6b6b;transform:scaleX(1.0801);">Others</div>
<div class="t" style="left:367.00px;top:388.97px;height:20px;line-height:20px;font-size:14.5px;color:#6b6b6b;transform:scaleX(1.0824);">Notes</div>
<div class="a" style="left:223px;top:410px;width:63px;height:3px;background:#f1754e;border-radius:1.5px;"></div>
<div class="a" style="left:1px;top:413px;width:420px;height:1px;background:#cfcfcf;"></div>
<div class="a" style="left:405.5px;top:421px;width:15.5px;height:619px;background:#f0f0f0;"></div>
<div class="a" style="left:405.5px;top:437px;width:15px;height:283px;background:#cdcdcd;"></div>
<svg class="a" style="left:406.500px;top:424px" width="12" height="10" viewBox="0 0 12 10"><path d="M2.300 7L6 3l3.700 4" fill="none" stroke="#505050" stroke-width="1.900"/></svg>
<svg class="a" style="left:406.500px;top:1025.500px" width="12" height="10" viewBox="0 0 12 10"><path d="M2.300 2.800L6 6.800l3.700-4" fill="none" stroke="#505050" stroke-width="1.900"/></svg>
<svg class="a" style="left:6px;top:425px" width="18" height="18" viewBox="0 0 18 18"><g fill="none" stroke="#3b4446" stroke-width="1.200"><path d="M1.500 16V2.500h14.500V16"/><path d="M2 8h6.500v8"/></g><path d="M3 9.500h4.500v6.500H3z" fill="#7d8486"/><path d="M3 15l4-5M3 12l2-2.500" stroke="#fff" stroke-width=".8"/></svg>
<div class="t" style="left:29.00px;top:424.47px;height:20px;line-height:20px;font-size:14.5px;color:#262e30;font-weight:bold;transform:scaleX(1.0347);">Support</div>
<div class="a" style="left:92.5px;top:433.5px;width:306.5px;height:1px;background:#e8e8e8;"></div>
<svg class="a" style="left:6px;top:731px" width="18" height="18" viewBox="0 0 18 18"><g fill="none" stroke="#6b7072" stroke-width="1.200"><rect x="2" y="2" width="13.500" height="10.500" rx="1"/></g><path d="M1.500 13.500h14.500v2.500H1.500z" fill="#8a9092"/></svg>
<div class="t" style="left:29.50px;top:730.47px;height:20px;line-height:20px;font-size:14.5px;color:#262e30;font-weight:bold;transform:scaleX(1.0640);">Raft</div>
<div class="a" style="left:65.5px;top:739.5px;width:333.5px;height:1px;background:#e8e8e8;"></div>
<svg class="a" style="left:7px;top:798px" width="16" height="16" viewBox="0 0 16 16"><g fill="none" stroke-width="1" stroke-linecap="round" stroke="#7d8486"><path d="M3 2.500c-2 3-2 8 0 11"/><path d="M6 2.500c-2 3-2 8 0 11M9 2.500c-2 3-2 8 0 11"/><path d="M12 2.500c-2 3-2 8 0 11c2-3 2-8 0-11z"/></g></svg>
<div class="t" style="left:28.50px;top:796.47px;height:20px;line-height:20px;font-size:14.5px;color:#262e30;font-weight:bold;transform:scaleX(1.0189);">Filament for Supports</div>
<div class="a" style="left:188px;top:805.5px;width:211px;height:1px;background:#e8e8e8;"></div>
<svg class="a" style="left:5px;top:893px" width="20" height="18" viewBox="0 0 20 18"><g fill="none" stroke="#3b4446" stroke-width="1.100" stroke-linejoin="round"><path d="M6 1.500h3l.4 1.700 1.400.8 1.700-.5 1.500 2.600-1.200 1.200v.7M6 1.500l-.4 1.700-1.400.8-1.700-.5L1 6.100l1.200 1.200v1.600L1 10.100l1.500 2.600 1.700-.5 1.400.8.400 1.700h2"/><circle cx="7.500" cy="8" r="2.200"/><circle cx="14" cy="13" r="1.300"/><path d="M13 9.500h2l.3 1.100.9.500 1.100-.3 1 1.700-.8.800v1l.8.800-1 1.700-1.100-.3-.9.500-.3 1.100h-2l-.3-1.100-.9-.5-1.100.3-1-1.700.8-.8v-1l-.8-.8 1-1.700 1.100.3.900-.5z"/></g></svg>
<div class="t" style="left:29.50px;top:892.47px;height:20px;line-height:20px;font-size:14.5px;color:#262e30;font-weight:bold;">Advanced</div>
<div class="a" style="left:105px;top:901.5px;width:294px;height:1px;background:#e8e8e8;"></div>
<div class="t" style="left:26.00px;top:455.97px;height:20px;line-height:20px;font-size:14.5px;color:#f1754e;transform:scaleX(1.0764);">Enable support</div>
<svg class="a" style="left:228px;top:458px" width="16" height="16" viewBox="0 0 16 16"><path d="M8.300 13.600A5.700 5.700 0 1 1 13 8.300" fill="none" stroke="#f1754e" stroke-width="1.150" stroke-linecap="round"/><path d="M10.700 7.200L15.300 7.900L12.800 10.900Z" fill="#f1754e"/></svg>
<div class="a" style="left:247px;top:458px;width:16px;height:16px;background:#009688;border-radius:1.500px"></div><svg class="a" style="left:247px;top:458px" width="16" height="16" viewBox="0 0 16 16"><path d="M3.300 7.600l3.300 3.300 6.100-6.100" fill="none" stroke="#fff" stroke-width="1.400"/></svg>
<div class="t" style="left:26.00px;top:485.97px;height:20px;line-height:20px;font-size:14.5px;color:#f1754e;transform:scaleX(1.0815);">Type</div>
<svg class="a" style="left:228px;top:488px" width="16" height="16" viewBox="0 0 16 16"><path d="M8.300 13.600A5.700 5.700 0 1 1 13 8.300" fill="none" stroke="#f1754e" stroke-width="1.150" stroke-linecap="round"/><path d="M10.700 7.200L15.300 7.900L12.800 10.900Z" fill="#f1754e"/></svg>
<div class="a" style="left:246px;top:483px;width:120px;height:25.5px;background:#fff;border:1px solid #dbdbdb;box-sizing:border-box;"></div>
<svg class="a" style="left:252px;top:492px" width="12" height="8" viewBox="0 0 12 8"><path d="M1.500 1.800L6 5.800l4.500-4" fill="none" stroke="#7c8282" stroke-width="1" stroke-linecap="round" stroke-linejoin="round"/></svg>
<div class="t" style="left:267.50px;top:485.97px;height:20px;line-height:20px;font-size:14.5px;color:#262e30;transform:scaleX(1.0795);">Tree(auto)</div>
<div class="t" style="left:26.00px;top:515.97px;height:20px;line-height:20px;font-size:14.5px;color:#f1754e;transform:scaleX(1.0857);">Style</div>
<svg class="a" style="left:228px;top:518px" width="16" height="16" viewBox="0 0 16 16"><path d="M8.300 13.600A5.700 5.700 0 1 1 13 8.300" fill="none" stroke="#f1754e" stroke-width="1.150" stroke-linecap="round"/><path d="M10.700 7.200L15.300 7.900L12.800 10.900Z" fill="#f1754e"/></svg>
<div class="a" style="left:246px;top:513px;width:120px;height:25.5px;background:#fff;border:1px solid #dbdbdb;box-sizing:border-box;"></div>
<div class="t" style="left:251.00px;top:515.97px;height:20px;line-height:20px;font-size:14.5px;color:#262e30;transform:scaleX(1.1000);">Tree Slim</div>
<div class="t" style="left:26.00px;top:545.97px;height:20px;line-height:20px;font-size:14.5px;color:#f1754e;transform:scaleX(1.0722);">Threshold angle</div>
<svg class="a" style="left:228px;top:548px" width="16" height="16" viewBox="0 0 16 16"><path d="M8.300 13.600A5.700 5.700 0 1 1 13 8.300" fill="none" stroke="#f1754e" stroke-width="1.150" stroke-linecap="round"/><path d="M10.700 7.200L15.300 7.900L12.800 10.900Z" fill="#f1754e"/></svg>
<div class="a" style="left:246px;top:543px;width:120px;height:25.5px;background:#fff;border:1px solid #dbdbdb;box-sizing:border-box;"></div>
<svg class="a" style="left:250px;top:545px" width="12" height="20" viewBox="0 0 12 20"><g fill="none" stroke="#9a9a9a" stroke-width="1"><path d="M2.500 6.500L6 3l3.500 3.500M2.500 13.500L6 17l3.500-3.500"/></g></svg>
<div class="a" style="left:250px;top:555px;width:11px;height:1px;background:#e6e6e6;"></div>
<div class="t" style="left:270.00px;top:545.97px;height:20px;line-height:20px;font-size:14.5px;color:#262e30;transform:scaleX(1.0900);">80</div>
<div class="t" style="left:355.00px;top:544.43px;height:17px;line-height:17px;font-size:11px;color:#6b6b6b;transform:scaleX(1.0900);">°</div>
<div class="t" style="left:26.00px;top:575.97px;height:20px;line-height:20px;font-size:14.5px;color:#262e30;transform:scaleX(1.0870);">First layer density</div>
<div class="a" style="left:246px;top:573px;width:120px;height:25.5px;background:#f0f0f0;border:1px solid #dbdbdb;box-sizing:border-box;"></div>
<div class="t" style="left:254.50px;top:575.97px;height:20px;line-height:20px;font-size:14.5px;color:#909090;transform:scaleX(1.0900);">90</div>
<div class="t" style="left:346.50px;top:578.64px;height:18px;line-height:18px;font-size:12px;color:#909090;transform:scaleX(1.0900);">%</div>
<div class="t" style="left:26.00px;top:605.97px;height:20px;line-height:20px;font-size:14.5px;color:#262e30;transform:scaleX(1.0614);">First layer expansion</div>
<div class="a" style="left:246px;top:603px;width:120px;height:25.5px;background:#f0f0f0;border:1px solid #dbdbdb;box-sizing:border-box;"></div>
<div class="t" style="left:254.50px;top:605.97px;height:20px;line-height:20px;font-size:14.5px;color:#909090;transform:scaleX(1.0900);">2</div>
<div class="t" style="left:336.50px;top:608.64px;height:18px;line-height:18px;font-size:12px;color:#909090;">mm</div>
<div class="t" style="left:26.00px;top:635.97px;height:20px;line-height:20px;font-size:14.5px;color:#f1754e;transform:scaleX(1.0907);">On build plate only</div>
<svg class="a" style="left:228px;top:638px" width="16" height="16" viewBox="0 0 16 16"><path d="M8.300 13.600A5.700 5.700 0 1 1 13 8.300" fill="none" stroke="#f1754e" stroke-width="1.150" stroke-linecap="round"/><path d="M10.700 7.200L15.300 7.900L12.800 10.900Z" fill="#f1754e"/></svg>
<div class="a" style="left:247px;top:638px;width:16px;height:16px;background:#009688;border-radius:1.500px"></div><svg class="a" style="left:247px;top:638px" width="16" height="16" viewBox="0 0 16 16"><path d="M3.300 7.600l3.300 3.300 6.100-6.100" fill="none" stroke="#fff" stroke-width="1.400"/></svg>
<div class="t" style="left:26.00px;top:665.97px;height:20px;line-height:20px;font-size:14.5px;color:#f1754e;transform:scaleX(1.1004);">Support critical regions only</div>
<svg class="a" style="left:228px;top:668px" width="16" height="16" viewBox="0 0 16 16"><path d="M8.300 13.600A5.700 5.700 0 1 1 13 8.300" fill="none" stroke="#f1754e" stroke-width="1.150" stroke-linecap="round"/><path d="M10.700 7.200L15.300 7.900L12.800 10.900Z" fill="#f1754e"/></svg>
<div class="a" style="left:247px;top:668px;width:16px;height:16px;background:#009688;border-radius:1.500px"></div><svg class="a" style="left:247px;top:668px" width="16" height="16" viewBox="0 0 16 16"><path d="M3.300 7.600l3.300 3.300 6.100-6.100" fill="none" stroke="#fff" stroke-width="1.400"/></svg>
<div class="t" style="left:26.00px;top:695.97px;height:20px;line-height:20px;font-size:14.5px;color:#262e30;transform:scaleX(1.0544);">Remove small overhangs</div>
<div class="a" style="left:247px;top:698px;width:16px;height:16px;background:#009688;border-radius:1.500px"></div><svg class="a" style="left:247px;top:698px" width="16" height="16" viewBox="0 0 16 16"><path d="M3.300 7.600l3.300 3.300 6.100-6.100" fill="none" stroke="#fff" stroke-width="1.400"/></svg>
<div class="t" style="left:26.00px;top:761.97px;height:20px;line-height:20px;font-size:14.5px;color:#262e30;transform:scaleX(1.0606);">Raft layers</div>
<div class="a" style="left:246px;top:759px;width:120px;height:25.5px;background:#fff;border:1px solid #dbdbdb;box-sizing:border-box;"></div>
<svg class="a" style="left:250px;top:761px" width="12" height="20" viewBox="0 0 12 20"><g fill="none" stroke="#9a9a9a" stroke-width="1"><path d="M2.500 6.500L6 3l3.500 3.500M2.500 13.500L6 17l3.500-3.500"/></g></svg>
<div class="a" style="left:250px;top:771px;width:11px;height:1px;background:#e6e6e6;"></div>
<div class="t" style="left:270.00px;top:761.97px;height:20px;line-height:20px;font-size:14.5px;color:#262e30;transform:scaleX(1.0900);">0</div>
<div class="t" style="left:329.00px;top:764.64px;height:18px;line-height:18px;font-size:12px;color:#6b6b6b;transform:scaleX(1.0153);">layers</div>
<div class="t" style="left:26.00px;top:827.97px;height:20px;line-height:20px;font-size:14.5px;color:#262e30;transform:scaleX(1.1102);">Support/raft base</div>
<div class="a" style="left:246px;top:825px;width:120px;height:25.5px;background:#fff;border:1px solid #dbdbdb;box-sizing:border-box;"></div>
<div class="t" style="left:251.00px;top:827.97px;height:20px;line-height:20px;font-size:14.5px;color:#262e30;transform:scaleX(1.1000);">Default</div>
<div class="t" style="left:26.00px;top:857.97px;height:20px;line-height:20px;font-size:14.5px;color:#262e30;transform:scaleX(1.1262);">Support/raft interface</div>
<div class="a" style="left:246px;top:855px;width:120px;height:25.5px;background:#f0f0f0;border:1px solid #dbdbdb;box-sizing:border-box;"></div>
<div class="t" style="left:251.00px;top:857.97px;height:20px;line-height:20px;font-size:14.5px;color:#909090;transform:scaleX(1.1000);">Default</div>
<div class="t" style="left:26.00px;top:923.97px;height:20px;line-height:20px;font-size:14.5px;color:#f1754e;transform:scaleX(1.0763);">Top Z distance</div>
<svg class="a" style="left:228px;top:926px" width="16" height="16" viewBox="0 0 16 16"><path d="M8.300 13.600A5.700 5.700 0 1 1 13 8.300" fill="none" stroke="#f1754e" stroke-width="1.150" stroke-linecap="round"/><path d="M10.700 7.200L15.300 7.900L12.800 10.900Z" fill="#f1754e"/></svg>
<div class="a" style="left:246px;top:921px;width:120px;height:25.5px;background:#fff;border:1px solid #dbdbdb;box-sizing:border-box;"></div>
<div class="t" style="left:254.50px;top:923.97px;height:20px;line-height:20px;font-size:14.5px;color:#262e30;transform:scaleX(1.0900);">0</div>
<div class="t" style="left:336.50px;top:926.64px;height:18px;line-height:18px;font-size:12px;color:#6b6b6b;">mm</div>
<div class="t" style="left:26.00px;top:953.97px;height:20px;line-height:20px;font-size:14.5px;color:#262e30;transform:scaleX(1.0953);">Bottom Z distance</div>
<div class="a" style="left:246px;top:951px;width:120px;height:25.5px;background:#fff;border:1px solid #dbdbdb;box-sizing:border-box;"></div>
<div class="t" style="left:254.50px;top:953.97px;height:20px;line-height:20px;font-size:14.5px;color:#262e30;transform:scaleX(1.0900);">0.2</div>
<div class="t" style="left:336.50px;top:956.64px;height:18px;line-height:18px;font-size:12px;color:#6b6b6b;">mm</div>
<div class="t" style="left:26.00px;top:983.97px;height:20px;line-height:20px;font-size:14.5px;color:#262e30;transform:scaleX(1.0703);">Base pattern</div>
<div class="a" style="left:246px;top:981px;width:120px;height:25.5px;background:#fff;border:1px solid #dbdbdb;box-sizing:border-box;"></div>
<svg class="a" style="left:251px;top:982px" width="23" height="23" viewBox="0 0 23 23"><defs><clipPath id="pc"><rect x="1.500" y="1.500" width="20" height="20" rx="2"/></clipPath></defs><rect x="1.500" y="1.500" width="20" height="20" rx="2" fill="#f4f4f4" stroke="#262e30" stroke-width="1.200"/><g clip-path="url(#pc)" stroke="#262e30" stroke-width="1.100"><path d="M-9.500 1.500l20 20M-4 1.500l20 20M1.500 1.500l20 20M7 1.500l20 20M12.500 1.500l20 20M-15 1.500l20 20"/></g></svg>
<div class="t" style="left:275.00px;top:983.97px;height:20px;line-height:20px;font-size:14.5px;color:#262e30;transform:scaleX(1.0730);">Rectilinear</div>
<div class="t" style="left:26.00px;top:1013.97px;height:20px;line-height:20px;font-size:14.5px;color:#262e30;transform:scaleX(1.0680);">Base pattern spacing</div>
<div class="a" style="left:246px;top:1011px;width:120px;height:25.5px;background:#fff;border:1px solid #dbdbdb;box-sizing:border-box;"></div>
<div class="t" style="left:254.50px;top:1013.97px;height:20px;line-height:20px;font-size:14.5px;color:#262e30;transform:scaleX(1.0900);">0.2</div>
<div class="t" style="left:336.50px;top:1016.64px;height:18px;line-height:18px;font-size:12px;color:#6b6b6b;">mm</div>
<div class="a" style="left:0px;top:1038.7px;width:422px;height:1.3px;background:#a8a8a8;"></div>
<div class="a" style="left:426px;top:67px;width:30px;height:30px;background:#f4f4f4;"></div>
<svg class="a" style="left:429px;top:70px" width="26" height="24" viewBox="0 0 26 24"><g fill="none" stroke="#262e30" stroke-width="1.100" stroke-linecap="round" stroke-linejoin="round"><path d="M13 3.500l3.200 3-3.200 3M17 3.500l3.200 3-3.200 3"/><path d="M7.500 13.500l-3.200 3 3.200 3M11.500 13.500l-3.200 3 3.200 3"/></g></svg>
<div class="a" style="left:427px;top:102px;width:127px;height:137.5px;background:#dfdfdf;border-radius:4px;"></div>
<div class="a" style="left:433.5px;top:109.5px;width:110.5px;height:111px;background:#dadada;border-radius:4px;border:1.400px solid #1e88e5;box-sizing:border-box;"></div>
<div class="a" style="left:439px;top:115px;width:100px;height:99.5px;background:#d3d3d3;"></div>
<div class="t" style="left:450.00px;top:121.66px;height:20px;line-height:20px;font-size:14px;color:#ececec;">1</div>
<svg class="a" style="left:434px;top:110px" width="111" height="110" viewBox="434 110 111 110"><defs><linearGradient id="tg" x1="0" y1="0" x2="1" y2="0"><stop offset="0" stop-color="#e40000"/><stop offset=".5" stop-color="#c80000"/><stop offset="1" stop-color="#a80000"/></linearGradient><linearGradient id="tg2" x1="0" y1="0" x2="1" y2="1"><stop offset="0" stop-color="#e80000"/><stop offset="1" stop-color="#a60000"/></linearGradient></defs><path d="M475.900 145.300 L484.600 174.700 L492 180 L506.200 164.400 L500.100 145.300Z" fill="url(#tg)"/><ellipse cx="488" cy="145.300" rx="12.400" ry="6.300" transform="rotate(8 488 145.300)" fill="#d20000"/><ellipse cx="489" cy="149.500" rx="7" ry="1.800" transform="rotate(8 489 149.500)" fill="#dedede"/><path d="M488 181.700 L490.600 192 Q493 196.500 498.400 195.500 L533.900 171.300 L532.200 164.400 L520.900 159.200 L507 166.200 L489.800 176.500Z" fill="url(#tg2)"/><path d="M489 181 L531 163.500" stroke="#f01010" stroke-width="1.500" fill="none"/><ellipse cx="464.700" cy="172" rx="14" ry="12" transform="rotate(-15 464.700 172)" fill="#d00000"/><path d="M466 160 Q475 158 479 163 Q477 175 474 180 Q471 168 466 160Z" fill="#a80000"/><path d="M467 161 Q471 168 473 176" stroke="#dedede" stroke-width="1.600" fill="none"/><path d="M460 173 L470 170 L472 177 L462 180Z" fill="#e21414"/></svg>
<div class="a" style="left:1442px;top:67px;width:404px;height:564.5px;background:#444444;"></div>
<div class="a" style="left:1442px;top:67px;width:404px;height:31px;background:#363636;"></div>
<svg class="a" style="left:1453px;top:75px" width="16" height="14" viewBox="0 0 16 14"><g fill="none" stroke="#fff" stroke-width="1.200" stroke-linejoin="round" stroke-linecap="round"><path d="M2.500 7.500L8 3l5.500 4.500M2.500 11.500L8 7l5.500 4.500"/></g></svg>
<div class="t" style="left:1481.00px;top:74.24px;height:18px;line-height:18px;font-size:12.5px;color:#ffffff;font-weight:bold;transform:scaleX(0.9919);">Color scheme</div>
<div class="a" style="left:1572px;top:75.5px;width:198px;height:20px;background:#262626;border:1px solid #4f4f4f;box-sizing:border-box;border-radius:3px;"></div>
<svg class="a" style="left:1576px;top:81px" width="14" height="10" viewBox="0 0 14 10"><path d="M2.500 3.500l4.500 3.500 4.500-3.500" fill="none" stroke="#fff" stroke-width="1.200" stroke-linecap="round" stroke-linejoin="round"/></svg>
<div class="t" style="left:1597.00px;top:77.24px;height:18px;line-height:18px;font-size:12px;color:#ffffff;transform:scaleX(1.0999);">Line Type</div>
<div class="t" style="left:1454.00px;top:99.24px;height:18px;line-height:18px;font-size:12.5px;color:#ffffff;font-weight:bold;transform:scaleX(1.0102);">Line Type</div>
<div class="t" style="left:1580.00px;top:99.24px;height:18px;line-height:18px;font-size:12.5px;color:#ffffff;font-weight:bold;transform:scaleX(1.0190);">Time</div>
<div class="t" style="left:1629.00px;top:99.24px;height:18px;line-height:18px;font-size:12.5px;color:#ffffff;font-weight:bold;transform:scaleX(1.0249);">Percent</div>
<div class="t" style="left:1682.00px;top:99.24px;height:18px;line-height:18px;font-size:12.5px;color:#ffffff;font-weight:bold;transform:scaleX(1.0370);">Used filament</div>
<div class="t" style="left:1789.00px;top:99.24px;height:18px;line-height:18px;font-size:12.5px;color:#ffffff;font-weight:bold;transform:scaleX(1.0233);">Display</div>
<div class="a" style="left:1442px;top:119px;width:404px;height:1px;background:#c8c8c8;"></div>
<div class="a" style="left:1454.5px;top:126px;width:9px;height:9px;background:#ffe64d;"></div>
<div class="t" style="left:1472.00px;top:122.24px;height:18px;line-height:18px;font-size:12px;color:#ffffff;transform:scaleX(1.1025);">Inner wall</div>
<div class="t" style="left:1580.00px;top:122.24px;height:18px;line-height:18px;font-size:12px;color:#ffffff;transform:scaleX(1.0856);">1h47m</div>
<div class="t" style="left:1629.00px;top:122.24px;height:18px;line-height:18px;font-size:12px;color:#ffffff;">17.0%</div>
<div class="t" style="left:1682.00px;top:122.24px;height:18px;line-height:18px;font-size:12px;color:#ffffff;transform:scaleX(1.0575);">8.16 m</div>
<div class="t" style="left:1737.00px;top:122.24px;height:18px;line-height:18px;font-size:12px;color:#ffffff;transform:scaleX(1.0687);">24.93 g</div>
<div class="a" style="left:1806px;top:123px;width:15px;height:15px;background:#555555;"></div>
<svg class="a" style="left:1806px;top:123px" width="15" height="15" viewBox="0 0 15 15"><path d="M3 7.500l3.200 3.200 5.800-6.200" fill="none" stroke="#009688" stroke-width="1.700"/></svg>
<div class="a" style="left:1454.5px;top:147px;width:9px;height:9px;background:#ff7d38;"></div>
<div class="t" style="left:1472.00px;top:143.24px;height:18px;line-height:18px;font-size:12px;color:#ffffff;transform:scaleX(1.1025);">Outer wall</div>
<div class="t" style="left:1580.00px;top:143.24px;height:18px;line-height:18px;font-size:12px;color:#ffffff;transform:scaleX(1.0856);">1h59m</div>
<div class="t" style="left:1629.00px;top:143.24px;height:18px;line-height:18px;font-size:12px;color:#ffffff;">19.0%</div>
<div class="t" style="left:1682.00px;top:143.24px;height:18px;line-height:18px;font-size:12px;color:#ffffff;transform:scaleX(1.0575);">8.34 m</div>
<div class="t" style="left:1737.00px;top:143.24px;height:18px;line-height:18px;font-size:12px;color:#ffffff;transform:scaleX(1.0687);">25.49 g</div>
<div class="a" style="left:1806px;top:144px;width:15px;height:15px;background:#555555;"></div>
<svg class="a" style="left:1806px;top:144px" width="15" height="15" viewBox="0 0 15 15"><path d="M3 7.500l3.200 3.200 5.800-6.200" fill="none" stroke="#009688" stroke-width="1.700"/></svg>
<div class="a" style="left:1454.5px;top:168px;width:9px;height:9px;background:#1f1fff;"></div>
<div class="t" style="left:1472.00px;top:164.24px;height:18px;line-height:18px;font-size:12px;color:#ffffff;transform:scaleX(1.1025);">Overhang wall</div>
<div class="t" style="left:1580.00px;top:164.24px;height:18px;line-height:18px;font-size:12px;color:#ffffff;transform:scaleX(1.0856);">44s</div>
<div class="t" style="left:1629.00px;top:164.24px;height:18px;line-height:18px;font-size:12px;color:#ffffff;">0.1%</div>
<div class="t" style="left:1682.00px;top:164.24px;height:18px;line-height:18px;font-size:12px;color:#ffffff;transform:scaleX(1.0575);">0.03 m</div>
<div class="t" style="left:1737.00px;top:164.24px;height:18px;line-height:18px;font-size:12px;color:#ffffff;transform:scaleX(1.0687);">0.09 g</div>
<div class="a" style="left:1806px;top:165px;width:15px;height:15px;background:#555555;"></div>
<svg class="a" style="left:1806px;top:165px" width="15" height="15" viewBox="0 0 15 15"><path d="M3 7.500l3.200 3.200 5.800-6.200" fill="none" stroke="#009688" stroke-width="1.700"/></svg>
<div class="a" style="left:1454.5px;top:189px;width:9px;height:9px;background:#b03029;"></div>
<div class="t" style="left:1472.00px;top:185.24px;height:18px;line-height:18px;font-size:12px;color:#ffffff;transform:scaleX(1.1025);">Sparse infill</div>
<div class="t" style="left:1580.00px;top:185.24px;height:18px;line-height:18px;font-size:12px;color:#ffffff;transform:scaleX(1.0856);">1h10m</div>
<div class="t" style="left:1629.00px;top:185.24px;height:18px;line-height:18px;font-size:12px;color:#ffffff;">11.1%</div>
<div class="t" style="left:1682.00px;top:185.24px;height:18px;line-height:18px;font-size:12px;color:#ffffff;transform:scaleX(1.0575);">4.65 m</div>
<div class="t" style="left:1737.00px;top:185.24px;height:18px;line-height:18px;font-size:12px;color:#ffffff;transform:scaleX(1.0687);">14.19 g</div>
<div class="a" style="left:1806px;top:186px;width:15px;height:15px;background:#555555;"></div>
<svg class="a" style="left:1806px;top:186px" width="15" height="15" viewBox="0 0 15 15"><path d="M3 7.500l3.200 3.200 5.800-6.200" fill="none" stroke="#009688" stroke-width="1.700"/></svg>
<div class="a" style="left:1454.5px;top:210px;width:9px;height:9px;background:#9654cc;"></div>
<div class="t" style="left:1472.00px;top:206.24px;height:18px;line-height:18px;font-size:12px;color:#ffffff;transform:scaleX(1.1025);">Internal solid infill</div>
<div class="t" style="left:1580.00px;top:206.24px;height:18px;line-height:18px;font-size:12px;color:#ffffff;transform:scaleX(1.0856);">1h14m</div>
<div class="t" style="left:1629.00px;top:206.24px;height:18px;line-height:18px;font-size:12px;color:#ffffff;">11.7%</div>
<div class="t" style="left:1682.00px;top:206.24px;height:18px;line-height:18px;font-size:12px;color:#ffffff;transform:scaleX(1.0575);">5.05 m</div>
<div class="t" style="left:1737.00px;top:206.24px;height:18px;line-height:18px;font-size:12px;color:#ffffff;transform:scaleX(1.0687);">15.43 g</div>
<div class="a" style="left:1806px;top:207px;width:15px;height:15px;background:#555555;"></div>
<svg class="a" style="left:1806px;top:207px" width="15" height="15" viewBox="0 0 15 15"><path d="M3 7.500l3.200 3.200 5.800-6.200" fill="none" stroke="#009688" stroke-width="1.700"/></svg>
<div class="a" style="left:1454.5px;top:231px;width:9px;height:9px;background:#f04040;"></div>
<div class="t" style="left:1472.00px;top:227.24px;height:18px;line-height:18px;font-size:12px;color:#ffffff;transform:scaleX(1.1025);">Top surface</div>
<div class="t" style="left:1580.00px;top:227.24px;height:18px;line-height:18px;font-size:12px;color:#ffffff;transform:scaleX(1.0856);">3m5s</div>
<div class="t" style="left:1629.00px;top:227.24px;height:18px;line-height:18px;font-size:12px;color:#ffffff;">0.5%</div>
<div class="t" style="left:1682.00px;top:227.24px;height:18px;line-height:18px;font-size:12px;color:#ffffff;transform:scaleX(1.0575);">0.12 m</div>
<div class="t" style="left:1737.00px;top:227.24px;height:18px;line-height:18px;font-size:12px;color:#ffffff;transform:scaleX(1.0687);">0.36 g</div>
<div class="a" style="left:1806px;top:228px;width:15px;height:15px;background:#555555;"></div>
<svg class="a" style="left:1806px;top:228px" width="15" height="15" viewBox="0 0 15 15"><path d="M3 7.500l3.200 3.200 5.800-6.200" fill="none" stroke="#009688" stroke-width="1.700"/></svg>
<div class="a" style="left:1454.5px;top:252px;width:9px;height:9px;background:#665cc7;"></div>
<div class="t" style="left:1472.00px;top:248.24px;height:18px;line-height:18px;font-size:12px;color:#ffffff;transform:scaleX(1.1025);">Bottom surface</div>
<div class="t" style="left:1580.00px;top:248.24px;height:18px;line-height:18px;font-size:12px;color:#ffffff;transform:scaleX(1.0856);">2m39s</div>
<div class="t" style="left:1629.00px;top:248.24px;height:18px;line-height:18px;font-size:12px;color:#ffffff;">0.4%</div>
<div class="t" style="left:1682.00px;top:248.24px;height:18px;line-height:18px;font-size:12px;color:#ffffff;transform:scaleX(1.0575);">0.16 m</div>
<div class="t" style="left:1737.00px;top:248.24px;height:18px;line-height:18px;font-size:12px;color:#ffffff;transform:scaleX(1.0687);">0.48 g</div>
<div class="a" style="left:1806px;top:249px;width:15px;height:15px;background:#555555;"></div>
<svg class="a" style="left:1806px;top:249px" width="15" height="15" viewBox="0 0 15 15"><path d="M3 7.500l3.200 3.200 5.800-6.200" fill="none" stroke="#009688" stroke-width="1.700"/></svg>
<div class="a" style="left:1454.5px;top:273px;width:9px;height:9px;background:#4d669f;"></div>
<div class="t" style="left:1472.00px;top:269.24px;height:18px;line-height:18px;font-size:12px;color:#ffffff;transform:scaleX(1.1025);">Bridge</div>
<div class="t" style="left:1580.00px;top:269.24px;height:18px;line-height:18px;font-size:12px;color:#ffffff;transform:scaleX(1.0856);">22s</div>
<div class="t" style="left:1629.00px;top:269.24px;height:18px;line-height:18px;font-size:12px;color:#ffffff;">&lt;0.1%</div>
<div class="t" style="left:1682.00px;top:269.24px;height:18px;line-height:18px;font-size:12px;color:#ffffff;transform:scaleX(1.0575);">0.01 m</div>
<div class="t" style="left:1737.00px;top:269.24px;height:18px;line-height:18px;font-size:12px;color:#ffffff;transform:scaleX(1.0687);">0.03 g</div>
<div class="a" style="left:1806px;top:270px;width:15px;height:15px;background:#555555;"></div>
<svg class="a" style="left:1806px;top:270px" width="15" height="15" viewBox="0 0 15 15"><path d="M3 7.500l3.200 3.200 5.800-6.200" fill="none" stroke="#009688" stroke-width="1.700"/></svg>
<div class="a" style="left:1454.5px;top:294px;width:9px;height:9px;background:#4d80ba;"></div>
<div class="t" style="left:1472.00px;top:290.24px;height:18px;line-height:18px;font-size:12px;color:#ffffff;transform:scaleX(1.1025);">Internal Bridge</div>
<div class="t" style="left:1580.00px;top:290.24px;height:18px;line-height:18px;font-size:12px;color:#ffffff;transform:scaleX(1.0856);">1m1s</div>
<div class="t" style="left:1629.00px;top:290.24px;height:18px;line-height:18px;font-size:12px;color:#ffffff;">0.2%</div>
<div class="t" style="left:1682.00px;top:290.24px;height:18px;line-height:18px;font-size:12px;color:#ffffff;transform:scaleX(1.0575);">0.07 m</div>
<div class="t" style="left:1737.00px;top:290.24px;height:18px;line-height:18px;font-size:12px;color:#ffffff;transform:scaleX(1.0687);">0.23 g</div>
<div class="a" style="left:1806px;top:291px;width:15px;height:15px;background:#555555;"></div>
<svg class="a" style="left:1806px;top:291px" width="15" height="15" viewBox="0 0 15 15"><path d="M3 7.500l3.200 3.200 5.800-6.200" fill="none" stroke="#009688" stroke-width="1.700"/></svg>
<div class="a" style="left:1454.5px;top:315px;width:9px;height:9px;background:#00876e;"></div>
<div class="t" style="left:1472.00px;top:311.24px;height:18px;line-height:18px;font-size:12px;color:#ffffff;transform:scaleX(1.1025);">Skirt</div>
<div class="t" style="left:1580.00px;top:311.24px;height:18px;line-height:18px;font-size:12px;color:#ffffff;transform:scaleX(1.0856);">1m4s</div>
<div class="t" style="left:1629.00px;top:311.24px;height:18px;line-height:18px;font-size:12px;color:#ffffff;">0.2%</div>
<div class="t" style="left:1682.00px;top:311.24px;height:18px;line-height:18px;font-size:12px;color:#ffffff;transform:scaleX(1.0575);">0.10 m</div>
<div class="t" style="left:1737.00px;top:311.24px;height:18px;line-height:18px;font-size:12px;color:#ffffff;transform:scaleX(1.0687);">0.30 g</div>
<div class="a" style="left:1806px;top:312px;width:15px;height:15px;background:#555555;"></div>
<svg class="a" style="left:1806px;top:312px" width="15" height="15" viewBox="0 0 15 15"><path d="M3 7.500l3.200 3.200 5.800-6.200" fill="none" stroke="#009688" stroke-width="1.700"/></svg>
<div class="a" style="left:1454.5px;top:336px;width:9px;height:9px;background:#003b6e;"></div>
<div class="t" style="left:1472.00px;top:332.24px;height:18px;line-height:18px;font-size:12px;color:#ffffff;transform:scaleX(1.1025);">Brim</div>
<div class="t" style="left:1580.00px;top:332.24px;height:18px;line-height:18px;font-size:12px;color:#ffffff;transform:scaleX(1.0856);">4m34s</div>
<div class="t" style="left:1629.00px;top:332.24px;height:18px;line-height:18px;font-size:12px;color:#ffffff;">0.7%</div>
<div class="t" style="left:1682.00px;top:332.24px;height:18px;line-height:18px;font-size:12px;color:#ffffff;transform:scaleX(1.0575);">0.36 m</div>
<div class="t" style="left:1737.00px;top:332.24px;height:18px;line-height:18px;font-size:12px;color:#ffffff;transform:scaleX(1.0687);">1.11 g</div>
<div class="a" style="left:1806px;top:333px;width:15px;height:15px;background:#555555;"></div>
<svg class="a" style="left:1806px;top:333px" width="15" height="15" viewBox="0 0 15 15"><path d="M3 7.500l3.200 3.200 5.800-6.200" fill="none" stroke="#009688" stroke-width="1.700"/></svg>
<div class="a" style="left:1454.5px;top:357px;width:9px;height:9px;background:#00ff00;"></div>
<div class="t" style="left:1472.00px;top:353.24px;height:18px;line-height:18px;font-size:12px;color:#ffffff;transform:scaleX(1.1025);">Support</div>
<div class="t" style="left:1580.00px;top:353.24px;height:18px;line-height:18px;font-size:12px;color:#ffffff;transform:scaleX(1.0856);">2h44m</div>
<div class="t" style="left:1629.00px;top:353.24px;height:18px;line-height:18px;font-size:12px;color:#ffffff;">26.0%</div>
<div class="t" style="left:1682.00px;top:353.24px;height:18px;line-height:18px;font-size:12px;color:#ffffff;transform:scaleX(1.0575);">13.31 m</div>
<div class="t" style="left:1737.00px;top:353.24px;height:18px;line-height:18px;font-size:12px;color:#ffffff;transform:scaleX(1.0687);">40.67 g</div>
<div class="a" style="left:1806px;top:354px;width:15px;height:15px;background:#555555;"></div>
<svg class="a" style="left:1806px;top:354px" width="15" height="15" viewBox="0 0 15 15"><path d="M3 7.500l3.200 3.200 5.800-6.200" fill="none" stroke="#009688" stroke-width="1.700"/></svg>
<div class="a" style="left:1454.5px;top:378px;width:9px;height:9px;background:#5ed194;"></div>
<div class="t" style="left:1472.00px;top:374.24px;height:18px;line-height:18px;font-size:12px;color:#ffffff;transform:scaleX(1.1025);">Custom</div>
<div class="t" style="left:1580.00px;top:374.24px;height:18px;line-height:18px;font-size:12px;color:#ffffff;transform:scaleX(1.0856);">38s</div>
<div class="t" style="left:1629.00px;top:374.24px;height:18px;line-height:18px;font-size:12px;color:#ffffff;">0.1%</div>
<div class="t" style="left:1682.00px;top:374.24px;height:18px;line-height:18px;font-size:12px;color:#ffffff;transform:scaleX(1.0575);">0.06 m</div>
<div class="t" style="left:1737.00px;top:374.24px;height:18px;line-height:18px;font-size:12px;color:#ffffff;transform:scaleX(1.0687);">0.18 g</div>
<div class="a" style="left:1806px;top:375px;width:15px;height:15px;background:#555555;"></div>
<svg class="a" style="left:1806px;top:375px" width="15" height="15" viewBox="0 0 15 15"><path d="M3 7.500l3.200 3.200 5.800-6.200" fill="none" stroke="#009688" stroke-width="1.700"/></svg>
<div class="a" style="left:1454.5px;top:399px;width:9px;height:9px;background:#38489b;"></div>
<div class="t" style="left:1472.00px;top:395.24px;height:18px;line-height:18px;font-size:12px;color:#ffffff;transform:scaleX(1.1025);">Travel</div>
<div class="t" style="left:1580.00px;top:395.24px;height:18px;line-height:18px;font-size:12px;color:#ffffff;transform:scaleX(1.0856);">1h21m</div>
<div class="t" style="left:1629.00px;top:395.24px;height:18px;line-height:18px;font-size:12px;color:#ffffff;">12.9%</div>
<div class="a" style="left:1806px;top:396px;width:15px;height:15px;background:#555555;"></div>
<div class="a" style="left:1454.5px;top:420px;width:9px;height:9px;background:#d133d1;"></div>
<div class="t" style="left:1472.00px;top:416.24px;height:18px;line-height:18px;font-size:12px;color:#ffffff;transform:scaleX(1.1025);">Retract</div>
<div class="a" style="left:1806px;top:417px;width:15px;height:15px;background:#555555;"></div>
<div class="a" style="left:1454.5px;top:441px;width:9px;height:9px;background:#4fa8cf;"></div>
<div class="t" style="left:1472.00px;top:437.24px;height:18px;line-height:18px;font-size:12px;color:#ffffff;transform:scaleX(1.1025);">Unretract</div>
<div class="a" style="left:1806px;top:438px;width:15px;height:15px;background:#555555;"></div>
<div class="a" style="left:1454.5px;top:462px;width:9px;height:9px;background:#ffff00;"></div>
<div class="t" style="left:1472.00px;top:458.24px;height:18px;line-height:18px;font-size:12px;color:#ffffff;transform:scaleX(1.1025);">Wipe</div>
<div class="a" style="left:1806px;top:459px;width:15px;height:15px;background:#555555;"></div>
<div class="a" style="left:1454.5px;top:483px;width:9px;height:9px;background:#e6e6e6;"></div>
<div class="t" style="left:1472.00px;top:479.24px;height:18px;line-height:18px;font-size:12px;color:#ffffff;transform:scaleX(1.1025);">Seams</div>
<div class="a" style="left:1806px;top:480px;width:15px;height:15px;background:#555555;"></div>
<svg class="a" style="left:1806px;top:480px" width="15" height="15" viewBox="0 0 15 15"><path d="M3 7.500l3.200 3.200 5.800-6.200" fill="none" stroke="#009688" stroke-width="1.700"/></svg>
<div class="t" style="left:1454.00px;top:509.24px;height:18px;line-height:18px;font-size:12.5px;color:#ffffff;font-weight:bold;transform:scaleX(1.0483);">Total estimation</div>
<div class="a" style="left:1442px;top:529px;width:404px;height:1px;background:#c8c8c8;"></div>
<div class="t" style="left:1454.00px;top:531.74px;height:18px;line-height:18px;font-size:12px;color:#ffffff;transform:scaleX(1.0800);">Filament:</div>
<div class="t" style="left:1578.50px;top:531.74px;height:18px;line-height:18px;font-size:12px;color:#ffffff;transform:scaleX(1.0687);">40.42 m</div>
<div class="t" style="left:1454.00px;top:550.74px;height:18px;line-height:18px;font-size:12px;color:#ffffff;transform:scaleX(1.0688);">Cost:</div>
<div class="t" style="left:1578.50px;top:550.74px;height:18px;line-height:18px;font-size:12px;color:#ffffff;transform:scaleX(1.0688);">1.23</div>
<div class="t" style="left:1454.00px;top:569.74px;height:18px;line-height:18px;font-size:12px;color:#ffffff;transform:scaleX(1.0823);">Prepare time:</div>
<div class="t" style="left:1578.50px;top:569.74px;height:18px;line-height:18px;font-size:12px;color:#ffffff;transform:scaleX(1.0688);">31s</div>
<div class="t" style="left:1454.00px;top:588.74px;height:18px;line-height:18px;font-size:12px;color:#ffffff;transform:scaleX(1.1250);">Model printing time:</div>
<div class="t" style="left:1578.50px;top:588.74px;height:18px;line-height:18px;font-size:12px;color:#ffffff;transform:scaleX(1.0687);">10h29m</div>
<div class="t" style="left:1454.00px;top:607.74px;height:18px;line-height:18px;font-size:12px;color:#ffffff;transform:scaleX(1.1250);">Total time:</div>
<div class="t" style="left:1578.50px;top:607.74px;height:18px;line-height:18px;font-size:12px;color:#ffffff;transform:scaleX(1.0687);">10h29m</div>
<div class="t" style="left:1640.50px;top:531.74px;height:18px;line-height:18px;font-size:12px;color:#ffffff;transform:scaleX(1.0688);">123.49 g</div>
<div class="a" style="left:1472px;top:634px;width:374px;height:328px;background:#444444;"></div>
<div class="a" style="left:1476px;top:798px;width:366px;height:19px;border:1px solid #d67a3a;box-sizing:border-box;"></div>
<div class="t" style="left:1480.50px;top:647.24px;height:18px;line-height:18px;font-size:12px;color:#e8873a;transform:scaleX(1.0738);">773631</div>
<div class="t" style="left:1532.00px;top:647.24px;height:18px;line-height:18px;font-size:12px;color:#dbd63a;">G17</div>
<div class="t" style="left:1480.50px;top:666.24px;height:18px;line-height:18px;font-size:12px;color:#e8873a;transform:scaleX(1.0738);">773632</div>
<div class="t" style="left:1532.00px;top:666.24px;height:18px;line-height:18px;font-size:12px;color:#dbd63a;">G3</div>
<div class="t" style="left:1553.03px;top:666.24px;height:18px;line-height:18px;font-size:12px;color:#ffffff;transform:scaleX(1.0642);">Z90.8 I-1.137 J.433 P1 F10800</div>
<div class="t" style="left:1480.50px;top:685.24px;height:18px;line-height:18px;font-size:12px;color:#e8873a;transform:scaleX(1.0738);">773633</div>
<div class="t" style="left:1532.00px;top:685.24px;height:18px;line-height:18px;font-size:12px;color:#dbd63a;">G1</div>
<div class="t" style="left:1553.03px;top:685.24px;height:18px;line-height:18px;font-size:12px;color:#ffffff;transform:scaleX(1.0643);">X32.492 Y84.361 Z90.8</div>
<div class="t" style="left:1480.50px;top:704.24px;height:18px;line-height:18px;font-size:12px;color:#e8873a;transform:scaleX(1.0738);">773634</div>
<div class="t" style="left:1532.00px;top:704.24px;height:18px;line-height:18px;font-size:12px;color:#dbd63a;">G1</div>
<div class="t" style="left:1553.03px;top:704.24px;height:18px;line-height:18px;font-size:12px;color:#ffffff;transform:scaleX(1.0642);">Z90.6</div>
<div class="t" style="left:1480.50px;top:723.24px;height:18px;line-height:18px;font-size:12px;color:#e8873a;transform:scaleX(1.0738);">773635</div>
<div class="t" style="left:1532.00px;top:723.24px;height:18px;line-height:18px;font-size:12px;color:#dbd63a;">G1</div>
<div class="t" style="left:1553.03px;top:723.24px;height:18px;line-height:18px;font-size:12px;color:#ffffff;transform:scaleX(1.0642);">E1 F1800</div>
<div class="t" style="left:1480.50px;top:742.24px;height:18px;line-height:18px;font-size:12px;color:#e8873a;transform:scaleX(1.0738);">773636</div>
<div class="t" style="left:1532.00px;top:742.24px;height:18px;line-height:18px;font-size:12px;color:#a6a6a6;transform:scaleX(1.0609);">;WIDTH:0.38292</div>
<div class="t" style="left:1480.50px;top:761.24px;height:18px;line-height:18px;font-size:12px;color:#e8873a;transform:scaleX(1.0738);">773637</div>
<div class="t" style="left:1532.00px;top:761.24px;height:18px;line-height:18px;font-size:12px;color:#dbd63a;">G1</div>
<div class="t" style="left:1553.03px;top:761.24px;height:18px;line-height:18px;font-size:12px;color:#ffffff;transform:scaleX(1.0642);">F600</div>
<div class="t" style="left:1480.50px;top:780.24px;height:18px;line-height:18px;font-size:12px;color:#e8873a;transform:scaleX(1.0738);">773638</div>
<div class="t" style="left:1532.00px;top:780.24px;height:18px;line-height:18px;font-size:12px;color:#dbd63a;">G1</div>
<div class="t" style="left:1553.03px;top:780.24px;height:18px;line-height:18px;font-size:12px;color:#ffffff;transform:scaleX(1.0642);">X32.233 Y83.731 E.01867</div>
<div class="t" style="left:1480.50px;top:799.24px;height:18px;line-height:18px;font-size:12px;color:#e8873a;transform:scaleX(1.0738);">773639</div>
<div class="t" style="left:1532.00px;top:799.24px;height:18px;line-height:18px;font-size:12px;color:#dbd63a;">G1</div>
<div class="t" style="left:1553.03px;top:799.24px;height:18px;line-height:18px;font-size:12px;color:#ffffff;transform:scaleX(1.0642);">X31.752 Y82.332 E.04057</div>
<div class="t" style="left:1480.50px;top:818.24px;height:18px;line-height:18px;font-size:12px;color:#e8873a;transform:scaleX(1.0738);">773640</div>
<div class="t" style="left:1532.00px;top:818.24px;height:18px;line-height:18px;font-size:12px;color:#a6a6a6;transform:scaleX(1.1081);">; stop printing object Lock Holder, Top.stl id:18355...</div>
<div class="t" style="left:1480.50px;top:837.24px;height:18px;line-height:18px;font-size:12px;color:#e8873a;transform:scaleX(1.0738);">773641</div>
<div class="t" style="left:1532.00px;top:837.24px;height:18px;line-height:18px;font-size:12px;color:#dbd63a;">G1</div>
<div class="t" style="left:1553.03px;top:837.24px;height:18px;line-height:18px;font-size:12px;color:#ffffff;transform:scaleX(1.0643);">E-.6 F1800</div>
<div class="t" style="left:1480.50px;top:856.24px;height:18px;line-height:18px;font-size:12px;color:#e8873a;transform:scaleX(1.0738);">773642</div>
<div class="t" style="left:1532.00px;top:856.24px;height:18px;line-height:18px;font-size:12px;color:#a6a6a6;transform:scaleX(0.9900);">;WIPE_START</div>
<div class="t" style="left:1480.50px;top:875.24px;height:18px;line-height:18px;font-size:12px;color:#e8873a;transform:scaleX(1.0738);">773643</div>
<div class="t" style="left:1532.00px;top:875.24px;height:18px;line-height:18px;font-size:12px;color:#dbd63a;">G1</div>
<div class="t" style="left:1553.03px;top:875.24px;height:18px;line-height:18px;font-size:12px;color:#ffffff;transform:scaleX(1.0643);">F2400</div>
<div class="t" style="left:1480.50px;top:894.24px;height:18px;line-height:18px;font-size:12px;color:#e8873a;transform:scaleX(1.0738);">773644</div>
<div class="t" style="left:1532.00px;top:894.24px;height:18px;line-height:18px;font-size:12px;color:#dbd63a;">G1</div>
<div class="t" style="left:1553.03px;top:894.24px;height:18px;line-height:18px;font-size:12px;color:#ffffff;transform:scaleX(1.0642);">X32.077 Y83.278 E-.4</div>
<div class="t" style="left:1480.50px;top:913.24px;height:18px;line-height:18px;font-size:12px;color:#e8873a;transform:scaleX(1.0738);">773645</div>
<div class="t" style="left:1532.00px;top:913.24px;height:18px;line-height:18px;font-size:12px;color:#a6a6a6;transform:scaleX(0.9900);">;WIPE_END</div>
<div class="t" style="left:1480.50px;top:932.24px;height:18px;line-height:18px;font-size:12px;color:#e8873a;transform:scaleX(1.0738);">773646</div>
<div class="t" style="left:1532.00px;top:932.24px;height:18px;line-height:18px;font-size:12px;color:#dbd63a;">M106</div>
<div class="t" style="left:1567.06px;top:932.24px;height:18px;line-height:18px;font-size:12px;color:#ffffff;transform:scaleX(1.0642);">S0</div>
<div class="a" style="left:1892.5px;top:203px;width:14.4px;height:700px;background:#ffffff;border-radius:3px;"></div>
<div class="a" style="left:1896px;top:203px;width:7.2px;height:694px;background:#009688;"></div>
<svg class="a" style="left:1891.750px;top:195.600px" width="16" height="16" viewBox="0 0 16 16"><circle cx="8" cy="8" r="7" fill="#fff"/><circle cx="8" cy="8" r="5.500" fill="#009688"/><path d="M8 4.500v7M4.500 8h7" stroke="#fff" stroke-width="1"/></svg>
<svg class="a" style="left:1891.750px;top:894.700px" width="16" height="16" viewBox="0 0 16 16"><circle cx="8" cy="8" r="7.500" fill="#fff"/><circle cx="8" cy="8" r="6" fill="#009688"/></svg>
<div class="a" style="left:1848px;top:171px;width:39px;height:31.5px;background:#ffffff;border-radius:1.5px;"></div>
<svg class="a" style="left:1884px;top:196px" width="8" height="8" viewBox="0 0 8 8"><path d="M0 0l7 7H0z" fill="#fff"/></svg>
<div class="t" style="left:1858.50px;top:171.24px;height:18px;line-height:18px;font-size:12px;color:#00a850;transform:scaleX(1.0488);">704</div>
<div class="t" style="left:1851.50px;top:186.24px;height:18px;line-height:18px;font-size:12px;color:#00a850;transform:scaleX(1.0656);">90.60</div>
<div class="a" style="left:1852px;top:903px;width:35px;height:32px;background:#ffffff;border-radius:1.5px;"></div>
<svg class="a" style="left:1884px;top:900px" width="10" height="8" viewBox="0 0 10 8"><path d="M0 8l9-6L3 8z" fill="#fff"/></svg>
<div class="t" style="left:1868.00px;top:902.74px;height:18px;line-height:18px;font-size:12px;color:#00a850;transform:scaleX(1.0900);">1</div>
<div class="t" style="left:1858.50px;top:917.74px;height:18px;line-height:18px;font-size:12px;color:#00a850;transform:scaleX(1.0490);">0.20</div>
<div class="a" style="left:729px;top:1013px;width:842px;height:13.7px;background:#ffffff;border-radius:3px;"></div>
<div class="a" style="left:731px;top:1016.25px;width:833px;height:7.5px;background:#009688;"></div>
<svg class="a" style="left:1561.500px;top:1011.900px" width="16" height="16" viewBox="0 0 16 16"><circle cx="8" cy="8" r="7.500" fill="#fff"/><circle cx="8" cy="8" r="6" fill="#009688"/></svg>
<div class="a" style="left:1582px;top:1011px;width:14px;height:17.6px;background:#ffffff;border-radius:1.5px;"></div>
<svg class="a" style="left:1576px;top:1015px" width="7" height="10" viewBox="0 0 7 10"><path d="M0 5l7-3v6z" fill="#fff"/></svg>
<div class="t" style="left:1584.20px;top:1010.34px;height:18px;line-height:18px;font-size:12px;color:#00a850;transform:scaleX(1.0900);">2</div>
<svg class="a" style="left:1889px;top:1010px" width="14" height="14" viewBox="0 0 14 14"><g fill="none" stroke="#009688" stroke-width="1.100" stroke-linejoin="round"><path d="M7 1.500l5 2.300-5 2.300-5-2.300z" fill="#009688"/><path d="M2 6.500l5 2.300 5-2.300M2 9.300l5 2.300 5-2.300"/></g></svg>
</div></body></html>
